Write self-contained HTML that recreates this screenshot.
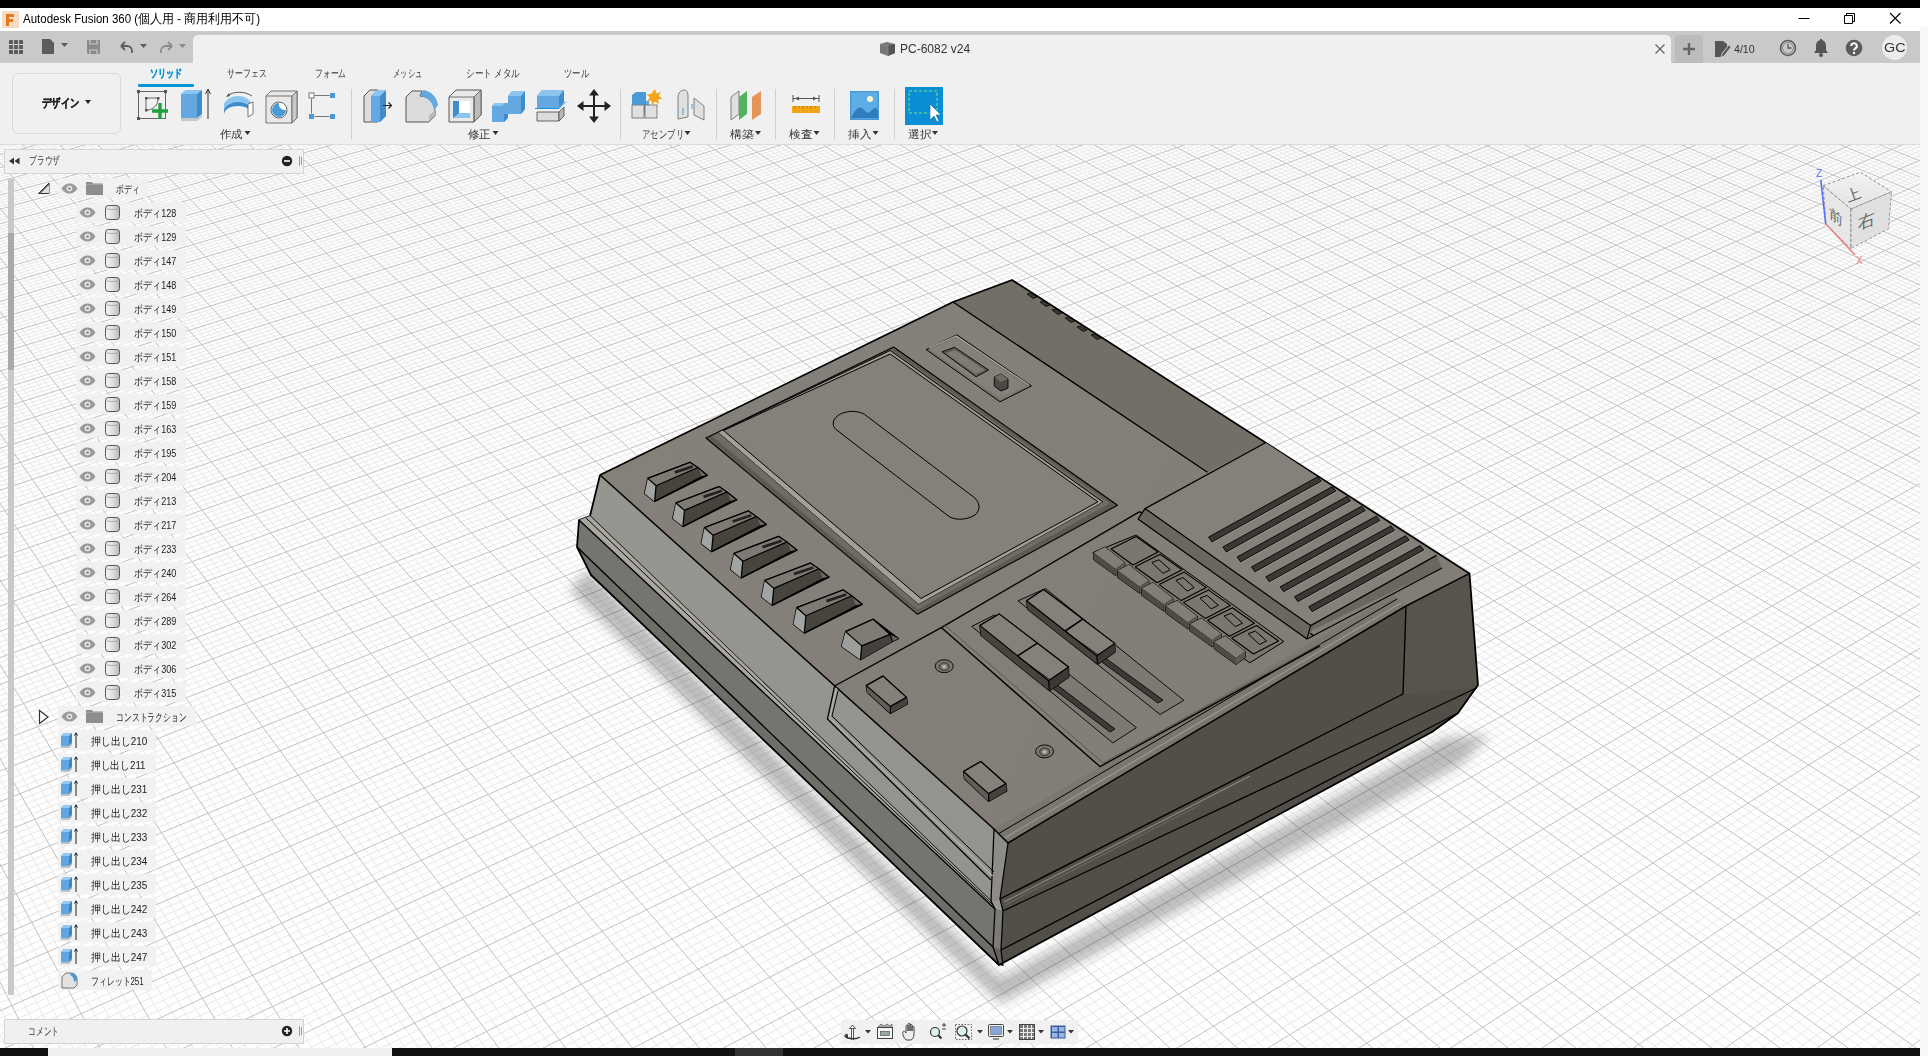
<!DOCTYPE html>
<html><head><meta charset="utf-8"><style>
*{margin:0;padding:0;box-sizing:border-box}
html,body{width:1928px;height:1056px;overflow:hidden;background:#f7f7f7;font-family:"Liberation Sans",sans-serif;color:#333}
.a{position:absolute}
</style></head><body>
<div class="a" style="left:0;top:145px;width:1920px;height:903px;background:#fefefe;overflow:hidden">
<svg class="a" style="left:0;top:0" width="1920" height="903" viewBox="0 0 1920 903">
<path d="M-454.7 104.4L1171.9 -317.6M-453.6 106.8L1174.9 -316.5M-452.5 109.3L1177.9 -315.4M-451.4 111.8L1180.8 -314.2M-449.2 116.8L1186.8 -311.9M-448.0 119.3L1189.8 -310.8M-446.9 121.9L1192.8 -309.6M-445.8 124.4L1195.8 -308.5M-443.5 129.5L1201.9 -306.1M-442.3 132.1L1204.9 -305.0M-441.2 134.7L1208.0 -303.8M-440.0 137.3L1211.0 -302.6M-437.7 142.5L1217.1 -300.3M-436.5 145.1L1220.2 -299.1M-435.4 147.8L1223.3 -297.9M-434.2 150.4L1226.4 -296.7M-431.8 155.7L1232.6 -294.3M-430.6 158.4L1235.8 -293.1M-429.4 161.1L1238.9 -291.9M-428.2 163.8L1242.0 -290.7M-425.8 169.2L1248.3 -288.3M-424.6 172.0L1251.5 -287.1M-423.4 174.7L1254.7 -285.9M-422.1 177.5L1257.9 -284.7M-419.7 183.0L1264.3 -282.2M-418.4 185.8L1267.5 -281.0M-417.2 188.6L1270.7 -279.7M-415.9 191.4L1273.9 -278.5M-413.4 197.1L1280.4 -276.0M-412.1 199.9L1283.7 -274.8M-410.8 202.8L1286.9 -273.5M-409.6 205.7L1290.2 -272.2M-407.0 211.5L1296.8 -269.7M-405.7 214.4L1300.1 -268.5M-404.4 217.3L1303.4 -267.2M-403.1 220.2L1306.7 -265.9M-400.4 226.1L1313.4 -263.3M-399.1 229.1L1316.8 -262.1M-397.8 232.1L1320.1 -260.8M-396.4 235.1L1323.5 -259.5M-393.7 241.1L1330.3 -256.9M-392.4 244.2L1333.7 -255.6M-391.0 247.2L1337.1 -254.3M-389.7 250.3L1340.5 -252.9M-386.9 256.5L1347.4 -250.3M-385.5 259.6L1350.8 -249.0M-384.1 262.7L1354.3 -247.7M-382.7 265.8L1357.7 -246.3M-379.9 272.1L1364.7 -243.7M-378.5 275.3L1368.2 -242.3M-377.1 278.5L1371.7 -241.0M-375.7 281.7L1375.2 -239.6M-372.8 288.2L1382.3 -236.9M-371.4 291.4L1385.9 -235.5M-369.9 294.7L1389.4 -234.2M-368.4 297.9L1393.0 -232.8M-365.5 304.5L1400.2 -230.0M-364.0 307.9L1403.8 -228.7M-362.5 311.2L1407.4 -227.3M-361.0 314.5L1411.0 -225.9M-358.0 321.3L1418.3 -223.1M-356.5 324.7L1422.0 -221.7M-355.0 328.1L1425.7 -220.3M-353.5 331.5L1429.3 -218.8M-350.4 338.4L1436.7 -216.0M-348.8 341.9L1440.5 -214.6M-347.3 345.4L1444.2 -213.2M-345.7 348.9L1447.9 -211.7M-342.6 356.0L1455.4 -208.8M-341.0 359.5L1459.2 -207.4M-339.4 363.1L1463.0 -205.9M-337.8 366.7L1466.8 -204.5M-334.6 373.9L1474.4 -201.5M-332.9 377.6L1478.2 -200.1M-331.3 381.3L1482.1 -198.6M-329.7 384.9L1485.9 -197.1M-326.4 392.3L1493.7 -194.2M-324.7 396.1L1497.6 -192.7M-323.0 399.8L1501.5 -191.2M-321.4 403.6L1505.4 -189.7M-318.0 411.2L1513.3 -186.6M-316.3 415.0L1517.2 -185.1M-314.6 418.8L1521.2 -183.6M-312.8 422.7L1525.1 -182.1M-309.4 430.5L1533.1 -179.0M-307.6 434.4L1537.1 -177.5M-305.9 438.3L1541.2 -175.9M-304.1 442.3L1545.2 -174.4M-300.6 450.3L1553.3 -171.3M-298.8 454.3L1557.4 -169.7M-297.0 458.3L1561.5 -168.1M-295.2 462.4L1565.6 -166.5M-291.5 470.6L1573.8 -163.4M-289.7 474.7L1578.0 -161.8M-287.8 478.8L1582.1 -160.2M-286.0 483.0L1586.3 -158.6M-282.2 491.4L1594.7 -155.4M-280.4 495.6L1598.9 -153.8M-278.5 499.8L1603.1 -152.1M-276.6 504.1L1607.4 -150.5M-272.7 512.7L1615.9 -147.2M-270.8 517.0L1620.2 -145.6M-268.9 521.4L1624.5 -144.0M-266.9 525.8L1628.8 -142.3M-263.0 534.6L1637.4 -139.0M-261.0 539.1L1641.8 -137.3M-259.0 543.5L1646.1 -135.6M-257.0 548.0L1650.5 -134.0M-253.0 557.1L1659.3 -130.6M-250.9 561.7L1663.7 -128.9M-248.9 566.3L1668.2 -127.2M-246.8 570.9L1672.6 -125.5M-242.7 580.2L1681.6 -122.0M-240.6 584.9L1686.1 -120.3M-238.5 589.6L1690.6 -118.6M-236.4 594.3L1695.1 -116.8M-232.1 603.9L1704.2 -113.4M-229.9 608.7L1708.8 -111.6M-227.8 613.6L1713.3 -109.8M-225.6 618.4L1717.9 -108.1M-221.2 628.3L1727.2 -104.5M-219.0 633.2L1731.8 -102.7M-216.8 638.2L1736.5 -101.0M-214.6 643.2L1741.2 -99.2M-210.1 653.3L1750.6 -95.5M-207.8 658.4L1755.3 -93.7M-205.5 663.6L1760.1 -91.9M-203.2 668.7L1764.8 -90.1M-198.6 679.1L1774.4 -86.4M-196.2 684.4L1779.2 -84.6M-193.9 689.6L1784.0 -82.7M-191.5 694.9L1788.9 -80.8M-186.8 705.6L1798.6 -77.1M-184.4 711.0L1803.5 -75.2M-181.9 716.4L1808.4 -73.3M-179.5 721.9L1813.3 -71.5M-174.6 732.9L1823.3 -67.7M-172.1 738.5L1828.2 -65.7M-169.6 744.1L1833.2 -63.8M-167.1 749.7L1838.2 -61.9M-162.1 761.0L1848.3 -58.0M-159.5 766.7L1853.4 -56.1M-157.0 772.5L1858.5 -54.1M-154.4 778.3L1863.6 -52.2M-149.2 790.0L1873.8 -48.2M-146.5 795.9L1879.0 -46.3M-143.9 801.8L1884.2 -44.3M-141.2 807.8L1889.4 -42.3M-135.9 819.8L1899.8 -38.3M-133.2 825.9L1905.1 -36.2M-130.4 832.0L1910.4 -34.2M-127.7 838.2L1915.6 -32.2M-122.2 850.6L1926.3 -28.1M-119.4 856.9L1931.6 -26.1M-116.6 863.2L1937.0 -24.0M-113.7 869.5L1942.4 -21.9M-108.0 882.3L1953.2 -17.8M-105.1 888.8L1958.7 -15.7M-102.2 895.3L1964.1 -13.6M-99.3 901.9L1969.6 -11.5M-93.4 915.1L1980.6 -7.2M-90.4 921.8L1986.2 -5.1M-87.4 928.5L1991.8 -3.0M-84.4 935.3L1997.4 -0.8M-78.3 948.9L2008.6 3.5M-75.3 955.8L2014.2 5.7M-72.2 962.8L2019.9 7.8M-69.1 969.8L2025.6 10.0M-62.8 983.9L2037.1 14.4M-59.6 991.0L2042.8 16.6M-56.4 998.2L2048.6 18.8M-53.2 1005.4L2054.4 21.1M-46.7 1020.0L2066.1 25.5M-43.4 1027.4L2071.9 27.8M-40.1 1034.8L2077.8 30.1M-36.7 1042.3L2083.7 32.3M-30.0 1057.4L2095.6 36.9M-26.6 1065.0L2101.6 39.2M-23.2 1072.7L2107.6 41.5M-19.7 1080.4L2113.7 43.8M-12.8 1096.1L2125.8 48.5M-9.3 1104.0L2131.9 50.8M-5.7 1111.9L2138.0 53.2M-2.1 1119.9L2144.1 55.5M5.1 1136.1L2156.5 60.3M8.7 1144.3L2162.7 62.6M12.4 1152.5L2169.0 65.0M16.1 1160.8L2175.2 67.4M23.6 1177.6L2187.8 72.3M27.3 1186.1L2194.2 74.7M31.2 1194.6L2200.6 77.2M35.0 1203.2L2206.9 79.6M42.7 1220.6L2219.8 84.5M46.7 1229.4L2226.3 87.0M50.6 1238.3L2232.8 89.5M54.6 1247.2L2239.3 92.0M62.6 1265.3L2252.4 97.1M66.7 1274.4L2259.0 99.6M70.8 1283.6L2265.6 102.1M74.9 1292.9L2272.3 104.7M83.3 1311.6L2285.7 109.8M87.5 1321.1L2292.4 112.4M91.8 1330.7L2299.2 115.0M96.1 1340.3L2306.0 117.6M104.8 1359.8L2319.6 122.9M109.2 1369.7L2326.5 125.5M113.6 1379.6L2333.4 128.2M118.0 1389.6L2340.3 130.8M127.1 1409.9L2354.3 136.2M131.6 1420.1L2361.3 138.9M136.3 1430.5L2368.4 141.6M140.9 1440.9L2375.4 144.3M150.3 1462.0L2389.7 149.7M155.1 1472.7L2396.8 152.5M159.9 1483.4L2404.0 155.3M164.7 1494.3L2411.3 158.0M174.5 1516.3L2425.8 163.6M179.4 1527.4L2433.1 166.4M184.4 1538.6L2440.5 169.2M189.5 1549.9L2447.9 172.1M199.7 1572.8L2462.7 177.8M204.9 1584.4L2470.2 180.7M210.1 1596.1L2477.7 183.5M215.3 1607.9L2485.3 186.4M226.0 1631.8L2500.4 192.3M231.4 1643.9L2508.1 195.2M236.8 1656.2L2515.8 198.1M242.3 1668.5L2523.5 201.1M253.4 1693.5L2539.0 207.1M259.1 1706.1L2546.8 210.0M264.8 1718.9L2554.6 213.1M270.5 1731.7L2562.5 216.1M282.1 1757.9L2578.4 222.2M288.0 1771.1L2586.3 225.2M294.0 1784.4L2594.4 228.3M300.0 1797.9L2602.4 231.4M312.2 1825.2L2618.6 237.6M318.3 1839.1L2626.8 240.8M324.6 1853.1L2635.0 243.9M330.9 1867.2L2643.2 247.1M343.6 1895.8L2659.8 253.4M350.1 1910.3L2668.2 256.6M356.6 1925.0L2676.6 259.9M363.2 1939.8L2685.0 263.1M376.6 1969.8L2702.0 269.6M383.4 1985.0L2710.5 272.9M390.2 2000.4L2719.1 276.2M397.1 2015.9L2727.7 279.5M411.2 2047.4L2745.1 286.1M418.3 2063.4L2753.8 289.5M425.5 2079.6L2762.6 292.9M432.8 2095.9L2771.4 296.3M447.6 2129.0L2789.2 303.1M455.1 2145.9L2798.1 306.5M462.6 2162.9L2807.1 310.0M470.3 2180.0L2816.1 313.4M-448.6 100.0L493.8 2184.7M-441.4 98.2L509.5 2172.2M-434.2 96.3L525.1 2159.7M-427.0 94.4L540.5 2147.3M-412.7 90.7L571.1 2122.8M-405.6 88.9L586.2 2110.7M-398.5 87.1L601.2 2098.7M-391.4 85.2L616.2 2086.7M-377.3 81.6L645.7 2063.1M-370.3 79.8L660.3 2051.4M-363.3 77.9L674.8 2039.8M-356.3 76.1L689.1 2028.2M-342.4 72.5L717.6 2005.4M-335.5 70.7L731.7 1994.1M-328.6 69.0L745.7 1982.9M-321.7 67.2L759.6 1971.8M-308.0 63.6L787.1 1949.7M-301.1 61.8L800.8 1938.8M-294.3 60.1L814.3 1928.0M-287.5 58.3L827.7 1917.2M-274.0 54.8L854.3 1895.9M-267.3 53.1L867.5 1885.4M-260.5 51.3L880.6 1874.9M-253.8 49.6L893.6 1864.5M-240.5 46.1L919.3 1843.9M-233.8 44.4L932.0 1833.7M-227.2 42.7L944.7 1823.5M-220.6 41.0L957.2 1813.5M-207.4 37.6L982.1 1793.5M-200.8 35.9L994.4 1783.6M-194.3 34.2L1006.7 1773.8M-187.7 32.5L1018.9 1764.1M-174.7 29.1L1043.0 1744.8M-168.3 27.4L1054.9 1735.2M-161.8 25.8L1066.8 1725.7M-155.3 24.1L1078.5 1716.3M-142.5 20.8L1101.9 1697.6M-136.1 19.1L1113.4 1688.3M-129.7 17.5L1124.9 1679.1M-123.4 15.8L1136.4 1670.0M-110.7 12.5L1159.0 1651.8M-104.4 10.9L1170.2 1642.8M-98.1 9.3L1181.3 1633.9M-91.8 7.6L1192.4 1625.1M-79.3 4.4L1214.3 1607.5M-73.0 2.8L1225.2 1598.8M-66.8 1.2L1236.0 1590.1M-60.6 -0.4L1246.7 1581.5M-48.3 -3.6L1268.0 1564.5M-42.1 -5.2L1278.6 1556.0M-36.0 -6.8L1289.1 1547.6M-29.9 -8.4L1299.5 1539.3M-17.7 -11.5L1320.1 1522.7M-11.6 -13.1L1330.4 1514.5M-5.5 -14.7L1340.5 1506.4M0.5 -16.3L1350.7 1498.3M12.6 -19.4L1370.7 1482.2M18.6 -20.9L1380.7 1474.2M24.6 -22.5L1390.5 1466.3M30.5 -24.0L1400.4 1458.4M42.4 -27.1L1419.8 1442.8M48.3 -28.6L1429.5 1435.1M54.3 -30.2L1439.1 1427.4M60.1 -31.7L1448.7 1419.8M71.9 -34.7L1467.6 1404.6M77.7 -36.2L1477.0 1397.1M83.6 -37.8L1486.3 1389.6M89.4 -39.3L1495.6 1382.2M101.0 -42.3L1514.0 1367.4M106.8 -43.8L1523.1 1360.1M112.6 -45.3L1532.2 1352.8M118.3 -46.7L1541.2 1345.6M129.8 -49.7L1559.1 1331.3M135.5 -51.2L1568.0 1324.2M141.2 -52.7L1576.8 1317.1M146.9 -54.1L1585.6 1310.0M158.2 -57.1L1603.0 1296.1M163.8 -58.5L1611.6 1289.2M169.4 -60.0L1620.2 1282.3M175.1 -61.4L1628.8 1275.4M186.2 -64.3L1645.7 1261.9M191.8 -65.8L1654.1 1255.1M197.4 -67.2L1662.5 1248.4M202.9 -68.7L1670.8 1241.8M214.0 -71.5L1687.3 1228.6M219.5 -72.9L1695.5 1222.0M225.0 -74.4L1703.6 1215.5M230.4 -75.8L1711.7 1209.0M241.4 -78.6L1727.8 1196.1M246.8 -80.0L1735.8 1189.7M252.2 -81.4L1743.7 1183.4M257.6 -82.8L1751.6 1177.0M268.4 -85.6L1767.3 1164.5M273.8 -87.0L1775.1 1158.3M279.2 -88.4L1782.8 1152.1M284.5 -89.8L1790.5 1145.9M295.2 -92.5L1805.7 1133.7M300.5 -93.9L1813.3 1127.6M305.8 -95.3L1820.8 1121.6M311.1 -96.7L1828.3 1115.6M321.6 -99.4L1843.2 1103.6M326.9 -100.7L1850.6 1097.7M332.1 -102.1L1858.0 1091.8M337.3 -103.4L1865.3 1086.0M347.7 -106.1L1879.8 1074.4M352.9 -107.5L1887.0 1068.6M358.1 -108.8L1894.1 1062.9M363.3 -110.2L1901.3 1057.1M373.5 -112.8L1915.4 1045.8M378.7 -114.2L1922.5 1040.2M383.8 -115.5L1929.5 1034.6M388.9 -116.8L1936.4 1029.0M399.1 -119.4L1950.2 1017.9M404.1 -120.7L1957.1 1012.4M409.2 -122.1L1963.9 1007.0M414.2 -123.4L1970.7 1001.5M424.3 -126.0L1984.2 990.7M429.3 -127.3L1990.9 985.3M434.3 -128.6L1997.6 980.0M439.3 -129.8L2004.2 974.7M449.2 -132.4L2017.4 964.1M454.2 -133.7L2023.9 958.9M459.1 -135.0L2030.4 953.7M464.1 -136.3L2036.9 948.5M473.9 -138.8L2049.7 938.2M478.8 -140.1L2056.1 933.1M483.7 -141.3L2062.5 928.0M488.5 -142.6L2068.8 922.9M498.3 -145.1L2081.4 912.8M503.1 -146.4L2087.6 907.8M507.9 -147.6L2093.8 902.9M512.8 -148.9L2100.0 897.9M522.4 -151.4L2112.3 888.1M527.2 -152.6L2118.4 883.2M531.9 -153.8L2124.5 878.3M536.7 -155.1L2130.5 873.5M546.2 -157.5L2142.5 863.9M550.9 -158.8L2148.5 859.1M555.7 -160.0L2154.4 854.3M560.4 -161.2L2160.3 849.6M569.8 -163.6L2172.1 840.2M574.4 -164.8L2177.9 835.5M579.1 -166.1L2183.7 830.9M583.8 -167.3L2189.5 826.3M593.1 -169.7L2200.9 817.1M597.7 -170.9L2206.6 812.5M602.3 -172.1L2212.3 807.9M606.9 -173.3L2218.0 803.4M616.1 -175.6L2229.2 794.4M620.7 -176.8L2234.8 790.0M625.3 -178.0L2240.3 785.5M629.8 -179.2L2245.9 781.1M638.9 -181.5L2256.8 772.3M643.5 -182.7L2262.3 767.9M648.0 -183.9L2267.7 763.5M652.5 -185.0L2273.1 759.2M661.5 -187.4L2283.9 750.6M666.0 -188.5L2289.2 746.3M670.4 -189.7L2294.6 742.1M674.9 -190.8L2299.9 737.8M683.8 -193.1L2310.4 729.4M688.2 -194.3L2315.6 725.2M692.6 -195.4L2320.8 721.0M697.1 -196.6L2326.0 716.9M705.9 -198.9L2336.3 708.6M710.2 -200.0L2341.4 704.5M714.6 -201.1L2346.5 700.4M719.0 -202.3L2351.6 696.3M727.7 -204.5L2361.7 688.3M732.0 -205.6L2366.7 684.2M736.4 -206.8L2371.7 680.2M740.7 -207.9L2376.7 676.3M749.3 -210.1L2386.6 668.3M753.6 -211.2L2391.5 664.4M757.9 -212.3L2396.4 660.5M762.1 -213.4L2401.3 656.6M770.7 -215.6L2410.9 648.8M774.9 -216.7L2415.8 645.0M779.1 -217.8L2420.6 641.1M783.4 -218.9L2425.3 637.3M791.8 -221.1L2434.8 629.7M796.0 -222.2L2439.5 625.9M800.2 -223.3L2444.2 622.1M804.4 -224.4L2448.9 618.4M812.7 -226.5L2458.2 610.9M816.9 -227.6L2462.9 607.2M821.0 -228.7L2467.5 603.5M825.2 -229.8L2472.0 599.9M833.4 -231.9L2481.2 592.6M837.6 -233.0L2485.7 588.9M841.7 -234.0L2490.2 585.3M845.8 -235.1L2494.7 581.7M853.9 -237.2L2503.7 574.5M858.0 -238.3L2508.1 571.0M862.1 -239.3L2512.5 567.4M866.1 -240.4L2517.0 563.9M874.2 -242.4L2525.7 556.9M878.2 -243.5L2530.1 553.4M882.3 -244.5L2534.4 549.9M886.3 -245.6L2538.8 546.4M894.3 -247.6L2547.4 539.5M898.3 -248.7L2551.6 536.1M902.3 -249.7L2555.9 532.7M906.2 -250.7L2560.2 529.3M914.2 -252.8L2568.6 522.5M918.1 -253.8L2572.8 519.2M922.0 -254.8L2577.0 515.8M926.0 -255.9L2581.1 512.5M933.8 -257.9L2589.4 505.8M937.7 -258.9L2593.5 502.5M941.6 -259.9L2597.6 499.2M945.5 -260.9L2601.7 496.0M953.3 -262.9L2609.9 489.5M957.2 -263.9L2613.9 486.2M961.0 -264.9L2617.9 483.0M964.9 -265.9L2622.0 479.8M972.6 -267.9L2629.9 473.4M976.4 -268.9L2633.9 470.2M980.2 -269.9L2637.9 467.0M984.0 -270.9L2641.8 463.9M991.6 -272.9L2649.6 457.6M995.4 -273.8L2653.5 454.5M999.2 -274.8L2657.4 451.4M1003.0 -275.8L2661.3 448.3M1010.5 -277.7L2669.0 442.1M1014.3 -278.7L2672.8 439.0M1018.0 -279.7L2676.6 436.0M1021.8 -280.7L2680.4 432.9M1029.2 -282.6L2688.0 426.9M1033.0 -283.5L2691.7 423.9M1036.7 -284.5L2695.5 420.9M1040.4 -285.5L2699.2 417.9M1047.8 -287.4L2706.6 411.9M1051.4 -288.3L2710.3 409.0M1055.1 -289.3L2714.0 406.0M1058.8 -290.2L2717.7 403.1M1066.1 -292.1L2725.0 397.2M1069.7 -293.1L2728.6 394.3M1073.4 -294.0L2732.2 391.4M1077.0 -295.0L2735.8 388.6M1084.2 -296.8L2743.0 382.8M1087.9 -297.8L2746.5 380.0M1091.5 -298.7L2750.1 377.1M1095.1 -299.6L2753.6 374.3M1102.2 -301.5L2760.7 368.6M1105.8 -302.4L2764.2 365.8M1109.4 -303.3L2767.7 363.0M1112.9 -304.3L2771.1 360.2M1120.0 -306.1L2778.1 354.7M1123.6 -307.0L2781.5 351.9M1127.1 -307.9L2784.9 349.2M1130.6 -308.8L2788.4 346.4M1137.7 -310.7L2795.2 341.0M1141.2 -311.6L2798.6 338.3M1144.7 -312.5L2801.9 335.6M1148.2 -313.4L2805.3 332.9M1155.1 -315.2L2812.0 327.5M1158.6 -316.1L2815.3 324.9M1162.1 -317.0L2818.6 322.2M1165.5 -317.9L2821.9 319.6" stroke="#e9e9e9" stroke-width="1" fill="none"/>
<path d="M-455.8 101.9L1169.0 -318.8M-450.3 114.3L1183.8 -313.1M-444.6 127.0L1198.8 -307.3M-438.9 139.9L1214.1 -301.5M-433.0 153.1L1229.5 -295.5M-427.0 166.5L1245.2 -289.5M-420.9 180.2L1261.1 -283.4M-414.6 194.3L1277.2 -277.3M-408.3 208.6L1293.5 -271.0M-401.8 223.2L1310.1 -264.6M-395.1 238.1L1326.9 -258.2M-388.3 253.4L1343.9 -251.6M-381.3 269.0L1361.2 -245.0M-374.2 284.9L1378.8 -238.3M-367.0 301.2L1396.6 -231.4M-359.5 317.9L1414.7 -224.5M-351.9 335.0L1433.0 -217.4M-344.2 352.4L1451.7 -210.3M-336.2 370.3L1470.6 -203.0M-328.0 388.6L1489.8 -195.6M-319.7 407.4L1509.3 -188.1M-311.1 426.6L1529.1 -180.5M-302.3 446.3L1549.3 -172.8M-293.3 466.5L1569.7 -165.0M-284.1 487.2L1590.5 -157.0M-274.7 508.4L1611.6 -148.9M-264.9 530.2L1633.1 -140.6M-255.0 552.5L1654.9 -132.3M-244.7 575.5L1677.1 -123.8M-234.2 599.1L1699.6 -115.1M-223.4 623.3L1722.6 -106.3M-212.3 648.3L1745.9 -97.4M-200.9 673.9L1769.6 -88.2M-189.2 700.3L1793.7 -79.0M-177.1 727.4L1818.3 -69.6M-164.6 755.3L1843.3 -60.0M-151.8 784.1L1868.7 -50.2M-138.6 813.8L1894.6 -40.3M-124.9 844.4L1921.0 -30.2M-110.9 875.9L1947.8 -19.9M-96.4 908.5L1975.1 -9.4M-81.4 942.1L2003.0 1.3M-65.9 976.8L2031.3 12.2M-49.9 1012.7L2060.2 23.3M-33.4 1049.8L2089.7 34.6M-16.3 1088.2L2119.7 46.1M1.5 1128.0L2150.3 57.9M19.8 1169.2L2181.5 69.9M38.9 1211.9L2213.4 82.1M58.6 1256.2L2245.8 94.5M79.1 1302.2L2279.0 107.3M100.4 1350.0L2312.8 120.2M122.5 1399.7L2347.3 133.5M145.6 1451.4L2382.5 147.0M169.6 1505.2L2418.5 160.8M194.6 1561.3L2455.3 174.9M220.6 1619.8L2492.8 189.3M247.9 1680.9L2531.2 204.1M276.3 1744.7L2570.4 219.1M306.1 1811.5L2610.5 234.5M337.2 1881.4L2651.5 250.2M369.9 1954.7L2693.5 266.3M404.1 2031.6L2736.4 282.8M440.1 2112.4L2780.3 299.7M478.0 2197.4L2825.2 316.9M-455.8 101.9L478.0 2197.4M-419.8 92.6L555.9 2135.0M-384.4 83.4L631.0 2074.9M-349.4 74.3L703.4 2016.8M-314.8 65.4L773.4 1960.7M-280.8 56.6L841.1 1906.5M-247.1 47.9L906.5 1854.1M-214.0 39.3L969.7 1803.5M-181.2 30.8L1030.9 1754.4M-148.9 22.4L1090.2 1706.9M-117.0 14.2L1147.7 1660.9M-85.5 6.0L1203.4 1616.2M-54.4 -2.0L1257.4 1573.0M-23.8 -10.0L1309.8 1531.0M6.6 -17.8L1360.7 1490.2M36.5 -25.6L1410.1 1450.6M66.0 -33.2L1458.1 1412.2M95.2 -40.8L1504.8 1374.8M124.0 -48.2L1550.2 1338.4M152.5 -55.6L1594.3 1303.1M180.7 -62.9L1637.3 1268.6M208.4 -70.1L1679.1 1235.1M235.9 -77.2L1719.8 1202.5M263.0 -84.2L1759.5 1170.7M289.8 -91.2L1798.1 1139.8M316.3 -98.0L1835.8 1109.6M342.5 -104.8L1872.5 1080.2M368.4 -111.5L1908.4 1051.5M394.0 -118.1L1943.3 1023.4M419.3 -124.7L1977.5 996.1M444.3 -131.1L2010.8 969.4M469.0 -137.5L2043.3 943.3M493.4 -143.9L2075.1 917.9M517.6 -150.1L2106.2 893.0M541.5 -156.3L2136.5 868.7M565.1 -162.4L2166.2 844.9M588.4 -168.5L2195.2 821.7M611.5 -174.4L2223.6 798.9M634.4 -180.4L2251.4 776.7M657.0 -186.2L2278.5 754.9M679.3 -192.0L2305.1 733.6M701.5 -197.7L2331.2 712.7M723.3 -203.4L2356.7 692.3M745.0 -209.0L2381.6 672.3M766.4 -214.5L2406.1 652.7M787.6 -220.0L2430.1 633.5M808.6 -225.5L2453.6 614.7M829.3 -230.8L2476.6 596.2M849.8 -236.1L2499.2 578.1M870.2 -241.4L2521.3 560.4M890.3 -246.6L2543.1 543.0M910.2 -251.8L2564.4 525.9M929.9 -256.9L2585.3 509.1M949.4 -261.9L2605.8 492.7M968.7 -266.9L2626.0 476.6M987.8 -271.9L2645.7 460.7M1006.8 -276.8L2665.1 445.2M1025.5 -281.6L2684.2 429.9M1044.1 -286.4L2702.9 414.9M1062.4 -291.2L2721.3 400.2M1080.6 -295.9L2739.4 385.7M1098.6 -300.6L2757.2 371.4M1116.5 -305.2L2774.6 357.5M1134.2 -309.8L2791.8 343.7M1151.7 -314.3L2808.6 330.2M1169.0 -318.8L2825.2 316.9" stroke="#c2c2c2" stroke-width="1" fill="none"/>
</svg>
<svg class="a" style="left:0;top:-145px" width="1920" height="1048" viewBox="0 0 1920 1048">
<defs>
<filter id="blur" x="-30%" y="-30%" width="160%" height="160%"><feGaussianBlur stdDeviation="6"/></filter>
<filter id="blur2" x="-30%" y="-30%" width="160%" height="160%"><feGaussianBlur stdDeviation="3"/></filter>
<linearGradient id="gL1" gradientUnits="userSpaceOnUse" x1="600" y1="480" x2="990" y2="860"><stop offset="0" stop-color="#95968f"/><stop offset="1" stop-color="#93948e"/></linearGradient>
<linearGradient id="gTop" gradientUnits="userSpaceOnUse" x1="700" y1="400" x2="1300" y2="700"><stop offset="0" stop-color="#85817a"/><stop offset="1" stop-color="#827e77"/></linearGradient>
<radialGradient id="gScrew"><stop offset="0" stop-color="#d8d6d0"/><stop offset=".5" stop-color="#8a877f"/><stop offset="1" stop-color="#5a5750"/></radialGradient>
</defs>
<polygon points="588.0,570.0 1000.0,978.0 1445.0,738.0 1490.0,735.0 1460.0,765.0 1000.0,1003.0 570.0,590.0" fill="#000" fill-opacity="0.26" filter="url(#blur)"/>
<polygon points="577.0,547.0 993.0,947.0 999.0,965.0 591.0,575.0" fill="#6f6d67"/>
<polygon points="579.0,520.0 995.0,909.0 993.0,947.0 577.0,547.0" fill="#747570"/>
<polygon points="590.0,516.0 991.0,901.0 995.0,909.0 579.0,520.0" fill="#8f8e87"/>
<polygon points="600.0,475.0 994.0,829.0 991.0,901.0 590.0,516.0" fill="url(#gL1)"/>
<polygon points="994.0,829.0 1008.0,843.0 1406.0,606.0 1469.5,573.4 1478.0,685.0 1458.0,713.0 1432.0,732.0 999.0,965.0 993.0,947.0 995.0,909.0 991.0,901.0" fill="#524f48"/>
<polygon points="994.0,829.0 1008.0,843.0 1000.0,899.0 991.0,901.0" fill="#8d8c86"/>
<polygon points="991.0,901.0 1000.0,899.0 1003.0,911.0 995.0,909.0" fill="#9a9892"/>
<polygon points="995.0,909.0 1003.0,911.0 1001.0,950.0 993.0,947.0" fill="#7c7b76"/>
<polygon points="993.0,947.0 1001.0,950.0 1003.0,966.0 999.0,965.0" fill="#66645e"/>
<polygon points="1406.0,606.0 1469.5,573.4 1478.0,685.0 1476.5,688.0 1402.5,694.2" fill="#57544d"/>
<polygon points="600.0,475.0 953.0,302.0 1012.0,280.0 1469.5,573.4 1406.0,606.0 1008.0,843.0 994.0,829.0" fill="url(#gTop)"/>
<polygon points="953.0,302.0 1012.0,280.0 1265.5,442.7 1207.5,472.3" fill="#736f66"/>
<polygon points="994.0,829.0 1394.0,594.0 1406.0,606.0 1008.0,843.0" fill="#7a776f"/>
<polyline points="998.0,834.0 1397.0,599.0" fill="none" stroke="#000" stroke-width="1.00" stroke-linejoin="round"/>
<polyline points="1003.0,839.0 1401.0,603.0" fill="none" stroke="#9c998f" stroke-width="1.12" stroke-linejoin="round"/>
<polyline points="1004.0,902.0 1250.0,776.0" fill="none" stroke="#8a877f" stroke-width="1.25" stroke-linejoin="round"/>
<polyline points="1005.0,905.0 1200.0,805.0" fill="none" stroke="#77746d" stroke-width="0.75" stroke-linejoin="round"/>
<polyline points="600.0,475.0 953.0,302.0 1012.0,280.0 1469.5,573.4 1478.0,685.0 1458.0,713.0 1432.0,732.0 999.0,965.0 591.0,575.0 577.0,547.0 579.0,520.0 590.0,516.0 600.0,475.0" fill="none" stroke="#000" stroke-width="1.75" stroke-linejoin="round"/>
<polyline points="600.0,475.0 994.0,829.0 1008.0,843.0 1406.0,606.0 1469.5,573.4" fill="none" stroke="#000" stroke-width="1.50" stroke-linejoin="round"/>
<polyline points="590.0,516.0 991.0,901.0" fill="none" stroke="#000" stroke-width="1.25" stroke-linejoin="round"/>
<polygon points="590.0,516.0 991.0,901.0 995.0,909.0 579.0,520.0" fill="#a9a79f"/>
<polyline points="586.0,518.0 993.0,905.0" fill="none" stroke="#000" stroke-width="1.00" stroke-linejoin="round"/>
<polyline points="579.0,520.0 995.0,909.0" fill="none" stroke="#000" stroke-width="1.38" stroke-linejoin="round"/>
<polyline points="577.0,547.0 993.0,947.0" fill="none" stroke="#000" stroke-width="1.38" stroke-linejoin="round"/>
<polyline points="994.0,829.0 991.0,901.0 995.0,909.0 993.0,947.0 999.0,965.0" fill="none" stroke="#000" stroke-width="1.25" stroke-linejoin="round"/>
<polyline points="1008.0,843.0 1000.0,899.0 1003.0,911.0 1001.0,950.0 1003.0,966.0" fill="none" stroke="#000" stroke-width="1.25" stroke-linejoin="round"/>
<polyline points="1000.0,899.0 1403.0,694.0 1406.0,606.0" fill="none" stroke="#000" stroke-width="1.38" stroke-linejoin="round"/>
<polyline points="1003.0,911.0 1476.5,688.0" fill="none" stroke="#000" stroke-width="1.25" stroke-linejoin="round"/>
<polyline points="1001.0,950.0 1458.0,713.0" fill="none" stroke="#000" stroke-width="1.25" stroke-linejoin="round"/>
<polyline points="953.0,302.0 1207.5,472.3" fill="none" stroke="#000" stroke-width="1.38" stroke-linejoin="round"/>
<polyline points="834.6,686.0 827.5,719.0 991.0,880.0" fill="none" stroke="#000" stroke-width="1.25" stroke-linejoin="round"/>
<polyline points="838.0,691.0 832.0,716.0 994.0,872.0" fill="none" stroke="#000" stroke-width="1.00" stroke-linejoin="round"/>
<polyline points="836.5,688.0 829.5,718.0 992.5,876.0" fill="none" stroke="#b0aea6" stroke-width="1.50" stroke-linejoin="round"/>
<polyline points="834.6,686.0 941.3,627.6 1139.7,511.6" fill="none" stroke="#000" stroke-width="1.38" stroke-linejoin="round"/>
<polyline points="941.3,627.6 1100.0,766.6 1320.0,645.8" fill="none" stroke="#000" stroke-width="1.38" stroke-linejoin="round"/>
<polyline points="944.0,624.5 1103.0,763.0 1322.0,643.0" fill="none" stroke="#55524b" stroke-width="0.88" stroke-linejoin="round"/>
<polyline points="1139.7,511.6 1313.7,635.9" fill="none" stroke="#000" stroke-width="1.38" stroke-linejoin="round"/>
<polygon points="706.0,438.0 893.6,347.0 1117.5,505.2 917.5,614.3" fill="#5d5a53" stroke="#000" stroke-width="1.1" stroke-linejoin="round"/>
<polygon points="712.0,436.0 891.0,349.5 1110.0,503.5 917.5,609.5" fill="#706c65"/>
<polygon points="718.6,432.3 890.2,350.5 1102.7,501.8 918.6,604.0" fill="#9e9b93" stroke="#000" stroke-width="1.0" stroke-linejoin="round"/>
<polygon points="723.5,430.5 890.2,354.0 1098.0,501.8 921.0,598.5" fill="#85817a"/>
<polygon points="718.6,432.3 723.5,430.5 921.0,598.5 1098.0,501.8 1102.7,501.8 918.6,604.0" fill="#a3a098"/>
<polyline points="723.5,430.5 890.2,354.0 1098.0,501.8 921.0,598.5 723.5,430.5" fill="none" stroke="#000" stroke-width="1.00" stroke-linejoin="round"/>
<path d="M836,429.5 L948,515.7 C953,520 965,521 975,515 C981,510 980,502 974,497.3 L864.3,414.2 C857,410 845,410.5 838,415.5 C832,420 832,426 836,429.5 Z" fill="none" stroke="#000" stroke-width="1"/>
<polygon points="926.1,349.5 956.8,334.8 1031.4,385.9 1000.0,401.8" fill="#7b776f" stroke="#000" stroke-width="1.0" stroke-linejoin="round"/>
<polygon points="930.0,349.5 956.8,338.0 1026.0,386.0 1000.0,398.0" fill="#85817a"/>
<polyline points="929.0,348.0 956.0,336.0 1029.0,385.0" fill="none" stroke="#a8a59d" stroke-width="1.12" stroke-linejoin="round"/>
<polygon points="942.0,351.8 954.5,347.3 988.6,370.0 976.1,376.8" fill="#5e5b54" stroke="#000" stroke-width="0.9" stroke-linejoin="round"/>
<polygon points="946.0,353.5 955.0,350.0 985.0,370.0 976.0,374.0" fill="#7f7b74"/>
<polygon points="994.3,377.0 1001.0,374.0 1008.0,379.0 1008.0,388.0 1001.0,391.0 994.3,386.0" fill="#4a4842" stroke="#000" stroke-width="0.9" stroke-linejoin="round"/>
<polygon points="994.3,377.0 1001.0,374.0 1008.0,379.0 1001.0,382.0" fill="#6f6b64"/>
<polygon points="1027.0,294.0 1031.0,293.0 1037.0,297.0 1033.0,298.5" fill="#3a3833" stroke="#000" stroke-width="0.7" stroke-linejoin="round"/>
<polygon points="1040.0,302.0 1044.0,301.0 1050.0,305.0 1046.0,306.5" fill="#3a3833" stroke="#000" stroke-width="0.7" stroke-linejoin="round"/>
<polygon points="1052.0,310.0 1056.0,309.0 1062.0,313.0 1058.0,314.5" fill="#3a3833" stroke="#000" stroke-width="0.7" stroke-linejoin="round"/>
<polygon points="1065.0,318.0 1069.0,317.0 1075.0,321.0 1071.0,322.5" fill="#3a3833" stroke="#000" stroke-width="0.7" stroke-linejoin="round"/>
<polygon points="1077.0,327.0 1081.0,326.0 1087.0,330.0 1083.0,331.5" fill="#3a3833" stroke="#000" stroke-width="0.7" stroke-linejoin="round"/>
<polygon points="1091.0,335.0 1095.0,334.0 1101.0,338.0 1097.0,339.5" fill="#3a3833" stroke="#000" stroke-width="0.7" stroke-linejoin="round"/>
<polygon points="647.8,478.4 690.0,462.3 707.2,475.3 654.6,501.4 644.7,493.5" fill="#000" stroke="#000" stroke-width="1.4" stroke-linejoin="round"/>
<polygon points="647.8,478.4 690.0,462.3 697.8,467.5 656.1,485.7" fill="#7e7a73"/>
<polygon points="656.1,485.7 697.8,467.5 701.5,476.9 654.6,501.4" fill="#47443e"/>
<polygon points="697.8,467.5 707.2,475.3 701.5,476.9" fill="#6d6a63"/>
<polygon points="647.8,478.4 656.1,485.7 654.6,501.4 644.7,493.5" fill="#a2a4a1"/>
<polyline points="647.8,478.4 690.0,462.3 697.8,467.5 656.1,485.7 647.8,478.4" fill="none" stroke="#000" stroke-width="1.25" stroke-linejoin="round"/>
<polyline points="656.1,485.7 654.6,501.4" fill="none" stroke="#000" stroke-width="1.25" stroke-linejoin="round"/>
<polyline points="697.8,467.5 707.2,475.3 701.5,476.9 654.6,501.4" fill="none" stroke="#000" stroke-width="1.25" stroke-linejoin="round"/>
<polyline points="674.8,472.4 692.8,466.4" fill="none" stroke="#222" stroke-width="2.75" stroke-linejoin="round"/>
<polygon points="676.0,503.0 719.0,486.6 736.6,499.8 682.9,526.5 672.8,518.4" fill="#000" stroke="#000" stroke-width="1.4" stroke-linejoin="round"/>
<polygon points="676.0,503.0 719.0,486.6 727.0,491.9 684.5,510.4" fill="#7e7a73"/>
<polygon points="684.5,510.4 727.0,491.9 730.8,501.5 682.9,526.5" fill="#47443e"/>
<polygon points="727.0,491.9 736.6,499.8 730.8,501.5" fill="#6d6a63"/>
<polygon points="676.0,503.0 684.5,510.4 682.9,526.5 672.8,518.4" fill="#a2a4a1"/>
<polyline points="676.0,503.0 719.0,486.6 727.0,491.9 684.5,510.4 676.0,503.0" fill="none" stroke="#000" stroke-width="1.25" stroke-linejoin="round"/>
<polyline points="684.5,510.4 682.9,526.5" fill="none" stroke="#000" stroke-width="1.25" stroke-linejoin="round"/>
<polyline points="727.0,491.9 736.6,499.8 730.8,501.5 682.9,526.5" fill="none" stroke="#000" stroke-width="1.25" stroke-linejoin="round"/>
<polyline points="703.5,496.9 721.9,490.8" fill="none" stroke="#222" stroke-width="2.75" stroke-linejoin="round"/>
<polygon points="704.5,527.7 748.4,511.0 766.3,524.5 711.6,551.6 701.3,543.4" fill="#000" stroke="#000" stroke-width="1.4" stroke-linejoin="round"/>
<polygon points="704.5,527.7 748.4,511.0 756.5,516.4 713.1,535.3" fill="#7e7a73"/>
<polygon points="713.1,535.3 756.5,516.4 760.3,526.1 711.6,551.6" fill="#47443e"/>
<polygon points="756.5,516.4 766.3,524.5 760.3,526.1" fill="#6d6a63"/>
<polygon points="704.5,527.7 713.1,535.3 711.6,551.6 701.3,543.4" fill="#a2a4a1"/>
<polyline points="704.5,527.7 748.4,511.0 756.5,516.4 713.1,535.3 704.5,527.7" fill="none" stroke="#000" stroke-width="1.25" stroke-linejoin="round"/>
<polyline points="713.1,535.3 711.6,551.6" fill="none" stroke="#000" stroke-width="1.25" stroke-linejoin="round"/>
<polyline points="756.5,516.4 766.3,524.5 760.3,526.1 711.6,551.6" fill="none" stroke="#000" stroke-width="1.25" stroke-linejoin="round"/>
<polyline points="732.6,521.5 751.3,515.2" fill="none" stroke="#222" stroke-width="2.75" stroke-linejoin="round"/>
<polygon points="734.0,553.5 778.7,536.4 797.0,550.2 741.2,577.9 730.7,569.5" fill="#000" stroke="#000" stroke-width="1.4" stroke-linejoin="round"/>
<polygon points="734.0,553.5 778.7,536.4 787.0,541.9 742.8,561.2" fill="#7e7a73"/>
<polygon points="742.8,561.2 787.0,541.9 790.9,551.9 741.2,577.9" fill="#47443e"/>
<polygon points="787.0,541.9 797.0,550.2 790.9,551.9" fill="#6d6a63"/>
<polygon points="734.0,553.5 742.8,561.2 741.2,577.9 730.7,569.5" fill="#a2a4a1"/>
<polyline points="734.0,553.5 778.7,536.4 787.0,541.9 742.8,561.2 734.0,553.5" fill="none" stroke="#000" stroke-width="1.25" stroke-linejoin="round"/>
<polyline points="742.8,561.2 741.2,577.9" fill="none" stroke="#000" stroke-width="1.25" stroke-linejoin="round"/>
<polyline points="787.0,541.9 797.0,550.2 790.9,551.9 741.2,577.9" fill="none" stroke="#000" stroke-width="1.25" stroke-linejoin="round"/>
<polyline points="762.6,547.1 781.7,540.8" fill="none" stroke="#222" stroke-width="2.75" stroke-linejoin="round"/>
<polygon points="764.8,580.5 810.4,563.1 829.0,577.2 772.1,605.3 761.5,596.8" fill="#000" stroke="#000" stroke-width="1.4" stroke-linejoin="round"/>
<polygon points="764.8,580.5 810.4,563.1 818.8,568.7 773.8,588.4" fill="#7e7a73"/>
<polygon points="773.8,588.4 818.8,568.7 822.8,578.9 772.1,605.3" fill="#47443e"/>
<polygon points="818.8,568.7 829.0,577.2 822.8,578.9" fill="#6d6a63"/>
<polygon points="764.8,580.5 773.8,588.4 772.1,605.3 761.5,596.8" fill="#a2a4a1"/>
<polyline points="764.8,580.5 810.4,563.1 818.8,568.7 773.8,588.4 764.8,580.5" fill="none" stroke="#000" stroke-width="1.25" stroke-linejoin="round"/>
<polyline points="773.8,588.4 772.1,605.3" fill="none" stroke="#000" stroke-width="1.25" stroke-linejoin="round"/>
<polyline points="818.8,568.7 829.0,577.2 822.8,578.9 772.1,605.3" fill="none" stroke="#000" stroke-width="1.25" stroke-linejoin="round"/>
<polyline points="794.0,574.0 813.4,567.5" fill="none" stroke="#222" stroke-width="2.75" stroke-linejoin="round"/>
<polygon points="796.8,607.7 843.2,590.0 862.1,604.3 804.3,633.0 793.4,624.3" fill="#000" stroke="#000" stroke-width="1.4" stroke-linejoin="round"/>
<polygon points="796.8,607.7 843.2,590.0 851.8,595.7 805.9,615.7" fill="#7e7a73"/>
<polygon points="805.9,615.7 851.8,595.7 855.9,606.1 804.3,633.0" fill="#47443e"/>
<polygon points="851.8,595.7 862.1,604.3 855.9,606.1" fill="#6d6a63"/>
<polygon points="796.8,607.7 805.9,615.7 804.3,633.0 793.4,624.3" fill="#a2a4a1"/>
<polyline points="796.8,607.7 843.2,590.0 851.8,595.7 805.9,615.7 796.8,607.7" fill="none" stroke="#000" stroke-width="1.25" stroke-linejoin="round"/>
<polyline points="805.9,615.7 804.3,633.0" fill="none" stroke="#000" stroke-width="1.25" stroke-linejoin="round"/>
<polyline points="851.8,595.7 862.1,604.3 855.9,606.1 804.3,633.0" fill="none" stroke="#000" stroke-width="1.25" stroke-linejoin="round"/>
<polyline points="826.5,601.1 846.3,594.5" fill="none" stroke="#222" stroke-width="2.75" stroke-linejoin="round"/>
<polygon points="845.6,631.6 873.2,619.2 898.4,638.5 892.5,641.4 860.5,659.7 841.6,646.5" fill="#000" stroke="#000" stroke-width="1.4" stroke-linejoin="round"/>
<polygon points="845.6,631.6 873.2,619.2 889.9,634.3 861.8,645.9" fill="#807c75"/>
<polygon points="861.8,645.9 889.9,634.3 892.5,641.4 860.5,659.7" fill="#45423d"/>
<polygon points="889.9,634.3 898.4,638.5 892.5,641.4" fill="#66635c"/>
<polygon points="845.6,631.6 861.8,645.9 860.5,659.7 841.6,646.5" fill="#9c9e9b"/>
<polyline points="845.6,631.6 873.2,619.2 889.9,634.3 861.8,645.9 845.6,631.6" fill="none" stroke="#000" stroke-width="1.25" stroke-linejoin="round"/>
<polyline points="861.8,645.9 860.5,659.7" fill="none" stroke="#000" stroke-width="1.25" stroke-linejoin="round"/>
<polyline points="889.9,634.3 892.5,641.4" fill="none" stroke="#000" stroke-width="1.25" stroke-linejoin="round"/>
<polygon points="866.3,685.6 882.9,676.1 906.5,697.4 907.5,704.0 890.4,713.5 867.2,692.2" fill="#000" stroke="#000" stroke-width="1.3" stroke-linejoin="round"/>
<polygon points="866.3,685.6 882.9,676.1 906.5,697.4 890.4,706.4" fill="#84807a"/>
<polygon points="866.3,685.6 890.4,706.4 890.4,713.5 867.2,692.2" fill="#615e58"/>
<polygon points="890.4,706.4 906.5,697.4 907.5,704.0 890.4,713.5" fill="#45423d"/>
<polyline points="866.3,685.6 882.9,676.1 906.5,697.4 890.4,706.4 866.3,685.6" fill="none" stroke="#000" stroke-width="1.25" stroke-linejoin="round"/>
<polyline points="890.4,706.4 890.4,713.5" fill="none" stroke="#000" stroke-width="1.25" stroke-linejoin="round"/>
<polygon points="963.6,771.5 980.8,761.5 1005.8,783.8 1006.8,791.0 988.6,801.4 964.5,778.7" fill="#000" stroke="#000" stroke-width="1.3" stroke-linejoin="round"/>
<polygon points="963.6,771.5 980.8,761.5 1005.8,783.8 988.6,793.6" fill="#84807a"/>
<polygon points="963.6,771.5 988.6,793.6 988.6,801.4 964.5,778.7" fill="#615e58"/>
<polygon points="988.6,793.6 1005.8,783.8 1006.8,791.0 988.6,801.4" fill="#45423d"/>
<polyline points="963.6,771.5 980.8,761.5 1005.8,783.8 988.6,793.6 963.6,771.5" fill="none" stroke="#000" stroke-width="1.25" stroke-linejoin="round"/>
<polyline points="988.6,793.6 988.6,801.4" fill="none" stroke="#000" stroke-width="1.25" stroke-linejoin="round"/>
<ellipse cx="944.2" cy="666.2" rx="9" ry="6.5" fill="#7a766f" stroke="#000" stroke-width="0.9"/>
<ellipse cx="944.2" cy="666.7" rx="5" ry="4" fill="url(#gScrew)" stroke="#222" stroke-width="0.6"/>
<ellipse cx="1044.6" cy="751.4" rx="9" ry="6.5" fill="#7a766f" stroke="#000" stroke-width="0.9"/>
<ellipse cx="1044.6" cy="751.9" rx="5" ry="4" fill="url(#gScrew)" stroke="#222" stroke-width="0.6"/>
<polygon points="971.7,626.4 994.4,615.0 1136.4,727.7 1112.8,742.9" fill="#7d7972" stroke="#000" stroke-width="0.9" stroke-linejoin="round"/>
<polygon points="1051.0,687.0 1056.0,684.0 1115.0,729.0 1110.0,732.0" fill="#3d3b36" stroke="#000" stroke-width="0.8" stroke-linejoin="round"/>
<polygon points="979.9,625.4 999.1,613.9 1068.5,667.0 1068.9,677.0 1049.5,690.8 980.9,635.4" fill="#000" stroke="#000" stroke-width="1.2" stroke-linejoin="round"/>
<polygon points="979.9,625.4 999.1,613.9 1068.5,667.0 1048.5,680.8" fill="#84807a"/>
<polygon points="979.9,625.4 1048.5,680.8 1049.5,690.8 980.9,635.4" fill="#47443e"/>
<polygon points="1048.5,680.8 1068.5,667.0 1068.9,677.0 1049.5,690.8" fill="#3b3934"/>
<polyline points="979.9,625.4 999.1,613.9 1068.5,667.0 1048.5,680.8 979.9,625.4" fill="none" stroke="#000" stroke-width="1.12" stroke-linejoin="round"/>
<polyline points="1048.5,680.8 1049.5,690.8" fill="none" stroke="#000" stroke-width="1.12" stroke-linejoin="round"/>
<polyline points="1017.6,655.9 1037.3,643.1" fill="none" stroke="#000" stroke-width="1.62" stroke-linejoin="round"/>
<polyline points="1018.6,657.4 1050.0,679.8" fill="none" stroke="#000" stroke-width="0.88" stroke-linejoin="round"/>
<polygon points="1018.0,600.8 1045.5,588.5 1183.8,700.3 1160.1,714.5" fill="#7d7972" stroke="#000" stroke-width="0.9" stroke-linejoin="round"/>
<polygon points="1099.0,660.0 1104.0,657.0 1163.0,700.0 1158.0,703.0" fill="#3d3b36" stroke="#000" stroke-width="0.8" stroke-linejoin="round"/>
<polygon points="1026.6,600.8 1043.6,589.5 1114.7,643.4 1115.1,651.9 1097.7,664.3 1027.6,609.3" fill="#000" stroke="#000" stroke-width="1.2" stroke-linejoin="round"/>
<polygon points="1026.6,600.8 1043.6,589.5 1114.7,643.4 1096.7,655.8" fill="#84807a"/>
<polygon points="1026.6,600.8 1096.7,655.8 1097.7,664.3 1027.6,609.3" fill="#47443e"/>
<polygon points="1096.7,655.8 1114.7,643.4 1115.1,651.9 1097.7,664.3" fill="#3b3934"/>
<polyline points="1026.6,600.8 1043.6,589.5 1114.7,643.4 1096.7,655.8 1026.6,600.8" fill="none" stroke="#000" stroke-width="1.12" stroke-linejoin="round"/>
<polyline points="1096.7,655.8 1097.7,664.3" fill="none" stroke="#000" stroke-width="1.12" stroke-linejoin="round"/>
<polyline points="1065.2,631.0 1082.7,619.1" fill="none" stroke="#000" stroke-width="1.62" stroke-linejoin="round"/>
<polyline points="1066.2,632.5 1098.2,654.8" fill="none" stroke="#000" stroke-width="0.88" stroke-linejoin="round"/>
<polygon points="1138.0,519.0 1145.0,508.6 1265.5,442.7 1436.5,555.4 1442.0,568.0 1312.4,630.0 1307.0,639.0" fill="#6a675f"/>
<polygon points="1145.0,508.6 1265.5,442.7 1436.5,555.4 1310.6,625.6" fill="#85817a"/>
<polyline points="1138.0,519.0 1145.0,508.6 1265.5,442.7" fill="none" stroke="#000" stroke-width="1.25" stroke-linejoin="round"/>
<polyline points="1145.0,508.6 1310.6,625.6 1436.5,555.4" fill="none" stroke="#000" stroke-width="1.25" stroke-linejoin="round"/>
<polyline points="1138.0,519.0 1307.0,639.0 1442.0,568.0" fill="none" stroke="#000" stroke-width="1.25" stroke-linejoin="round"/>
<polyline points="1310.6,625.6 1307.0,639.0" fill="none" stroke="#000" stroke-width="1.12" stroke-linejoin="round"/>
<polygon points="1208.6,537.0 1317.7,476.8 1321.2,481.3 1212.1,542.0" fill="#3b3934" stroke="#000" stroke-width="0.9" stroke-linejoin="round"/>
<polyline points="1212.6,542.8 1321.7,482.1" fill="none" stroke="#9a968e" stroke-width="0.88" stroke-linejoin="round"/>
<polygon points="1222.9,547.0 1332.4,486.6 1335.9,491.1 1226.4,552.0" fill="#3b3934" stroke="#000" stroke-width="0.9" stroke-linejoin="round"/>
<polyline points="1226.9,552.8 1336.4,491.9" fill="none" stroke="#9a968e" stroke-width="0.88" stroke-linejoin="round"/>
<polygon points="1237.2,556.9 1347.0,496.4 1350.5,500.9 1240.7,561.9" fill="#3b3934" stroke="#000" stroke-width="0.9" stroke-linejoin="round"/>
<polyline points="1241.2,562.7 1351.0,501.7" fill="none" stroke="#9a968e" stroke-width="0.88" stroke-linejoin="round"/>
<polygon points="1251.5,566.9 1361.7,506.2 1365.2,510.7 1255.0,571.9" fill="#3b3934" stroke="#000" stroke-width="0.9" stroke-linejoin="round"/>
<polyline points="1255.5,572.7 1365.7,511.5" fill="none" stroke="#9a968e" stroke-width="0.88" stroke-linejoin="round"/>
<polygon points="1265.9,576.8 1376.3,516.1 1379.8,520.6 1269.4,581.8" fill="#3b3934" stroke="#000" stroke-width="0.9" stroke-linejoin="round"/>
<polyline points="1269.9,582.6 1380.3,521.4" fill="none" stroke="#9a968e" stroke-width="0.88" stroke-linejoin="round"/>
<polygon points="1280.2,586.8 1391.0,525.9 1394.5,530.4 1283.7,591.8" fill="#3b3934" stroke="#000" stroke-width="0.9" stroke-linejoin="round"/>
<polyline points="1284.2,592.6 1395.0,531.2" fill="none" stroke="#9a968e" stroke-width="0.88" stroke-linejoin="round"/>
<polygon points="1294.5,596.7 1405.6,535.7 1409.1,540.2 1298.0,601.7" fill="#3b3934" stroke="#000" stroke-width="0.9" stroke-linejoin="round"/>
<polyline points="1298.5,602.5 1409.6,541.0" fill="none" stroke="#9a968e" stroke-width="0.88" stroke-linejoin="round"/>
<polygon points="1308.8,606.7 1420.3,545.5 1423.8,550.0 1312.3,611.7" fill="#3b3934" stroke="#000" stroke-width="0.9" stroke-linejoin="round"/>
<polyline points="1312.8,612.5 1424.3,550.8" fill="none" stroke="#9a968e" stroke-width="0.88" stroke-linejoin="round"/>
<polygon points="1092.8,552.7 1136.1,535.0 1283.9,641.5 1249.8,662.8" fill="#7b776f" stroke="#000" stroke-width="1.0" stroke-linejoin="round"/>
<polygon points="1093.5,552.7 1104.9,547.0 1124.8,562.6 1124.8,568.6 1115.5,575.5 1093.5,559.7" fill="#000" stroke="#000" stroke-width="1.0" stroke-linejoin="round"/>
<polygon points="1093.5,552.7 1104.9,547.0 1124.8,562.6 1115.5,569.0" fill="#827e77"/>
<polygon points="1093.5,552.7 1115.5,569.0 1115.5,575.5 1093.5,559.7" fill="#4f4c46"/>
<polygon points="1115.5,569.0 1124.8,562.6 1124.8,568.6 1115.5,575.5" fill="#5d5a53"/>
<polygon points="1117.6,570.5 1129.0,564.8 1148.9,580.4 1148.9,586.4 1139.6,593.3 1117.6,577.5" fill="#000" stroke="#000" stroke-width="1.0" stroke-linejoin="round"/>
<polygon points="1117.6,570.5 1129.0,564.8 1148.9,580.4 1139.6,586.8" fill="#827e77"/>
<polygon points="1117.6,570.5 1139.6,586.8 1139.6,593.3 1117.6,577.5" fill="#4f4c46"/>
<polygon points="1139.6,586.8 1148.9,580.4 1148.9,586.4 1139.6,593.3" fill="#5d5a53"/>
<polygon points="1141.7,588.3 1153.1,582.6 1173.0,598.2 1173.0,604.2 1163.7,611.1 1141.7,595.3" fill="#000" stroke="#000" stroke-width="1.0" stroke-linejoin="round"/>
<polygon points="1141.7,588.3 1153.1,582.6 1173.0,598.2 1163.7,604.6" fill="#827e77"/>
<polygon points="1141.7,588.3 1163.7,604.6 1163.7,611.1 1141.7,595.3" fill="#4f4c46"/>
<polygon points="1163.7,604.6 1173.0,598.2 1173.0,604.2 1163.7,611.1" fill="#5d5a53"/>
<polygon points="1165.8,606.1 1177.2,600.4 1197.1,616.0 1197.1,622.0 1187.8,628.9 1165.8,613.1" fill="#000" stroke="#000" stroke-width="1.0" stroke-linejoin="round"/>
<polygon points="1165.8,606.1 1177.2,600.4 1197.1,616.0 1187.8,622.4" fill="#827e77"/>
<polygon points="1165.8,606.1 1187.8,622.4 1187.8,628.9 1165.8,613.1" fill="#4f4c46"/>
<polygon points="1187.8,622.4 1197.1,616.0 1197.1,622.0 1187.8,628.9" fill="#5d5a53"/>
<polygon points="1189.9,623.9 1201.3,618.2 1221.2,633.8 1221.2,639.8 1211.9,646.7 1189.9,630.9" fill="#000" stroke="#000" stroke-width="1.0" stroke-linejoin="round"/>
<polygon points="1189.9,623.9 1201.3,618.2 1221.2,633.8 1211.9,640.2" fill="#827e77"/>
<polygon points="1189.9,623.9 1211.9,640.2 1211.9,646.7 1189.9,630.9" fill="#4f4c46"/>
<polygon points="1211.9,640.2 1221.2,633.8 1221.2,639.8 1211.9,646.7" fill="#5d5a53"/>
<polygon points="1214.0,641.7 1225.4,636.0 1245.3,651.6 1245.3,657.6 1236.0,664.5 1214.0,648.7" fill="#000" stroke="#000" stroke-width="1.0" stroke-linejoin="round"/>
<polygon points="1214.0,641.7 1225.4,636.0 1245.3,651.6 1236.0,658.0" fill="#827e77"/>
<polygon points="1214.0,641.7 1236.0,658.0 1236.0,664.5 1214.0,648.7" fill="#4f4c46"/>
<polygon points="1236.0,658.0 1245.3,651.6 1245.3,657.6 1236.0,664.5" fill="#5d5a53"/>
<polyline points="1111.0,549.0 1136.1,536.5 1158.0,552.0 1133.0,565.0 1111.0,549.0" fill="none" stroke="#000" stroke-width="1.12" stroke-linejoin="round"/>
<polyline points="1151.8,562.6 1158.9,559.8 1170.2,569.7 1163.1,573.3 1151.8,562.6" fill="none" stroke="#000" stroke-width="1.00" stroke-linejoin="round"/>
<polyline points="1135.1,566.8 1160.2,554.3 1182.1,569.8 1157.1,582.8 1135.1,566.8" fill="none" stroke="#000" stroke-width="1.12" stroke-linejoin="round"/>
<polyline points="1175.9,580.4 1183.0,577.6 1194.3,587.5 1187.2,591.1 1175.9,580.4" fill="none" stroke="#000" stroke-width="1.00" stroke-linejoin="round"/>
<polyline points="1159.2,584.6 1184.3,572.1 1206.2,587.6 1181.2,600.6 1159.2,584.6" fill="none" stroke="#000" stroke-width="1.12" stroke-linejoin="round"/>
<polyline points="1200.0,598.2 1207.1,595.4 1218.4,605.3 1211.3,608.9 1200.0,598.2" fill="none" stroke="#000" stroke-width="1.00" stroke-linejoin="round"/>
<polyline points="1183.3,602.4 1208.4,589.9 1230.3,605.4 1205.3,618.4 1183.3,602.4" fill="none" stroke="#000" stroke-width="1.12" stroke-linejoin="round"/>
<polyline points="1224.1,616.0 1231.2,613.2 1242.5,623.1 1235.4,626.7 1224.1,616.0" fill="none" stroke="#000" stroke-width="1.00" stroke-linejoin="round"/>
<polyline points="1207.4,620.2 1232.5,607.7 1254.4,623.2 1229.4,636.2 1207.4,620.2" fill="none" stroke="#000" stroke-width="1.12" stroke-linejoin="round"/>
<polyline points="1248.2,633.8 1255.3,631.0 1266.6,640.9 1259.5,644.5 1248.2,633.8" fill="none" stroke="#000" stroke-width="1.00" stroke-linejoin="round"/>
<polyline points="1231.5,638.0 1256.6,625.5 1278.5,641.0 1253.5,654.0 1231.5,638.0" fill="none" stroke="#000" stroke-width="1.12" stroke-linejoin="round"/>
</svg>
</div>
<div class="a" style="left:0;top:0;width:1920px;height:8px;background:#000"></div>
<div class="a" style="left:0;top:8px;width:1920px;height:23px;background:#fff"></div>
<svg class="a" style="left:2px;top:11px" width="17" height="17" viewBox="0 0 17 17"><rect x="0" y="0" width="17" height="17" fill="#f6dcc4"/><path d="M4 3h8v3H7v2h4v3H7v4H4z" fill="#e07b22"/></svg>
<svg class="a" style="left:1790px;top:8px" width="130" height="23" viewBox="0 0 130 23"><path d="M8.5 10.5h11" stroke="#000" stroke-width="1"/><path d="M54.5 7.5h8v8h-8z M56.5 7.5v-2h8v8h-2" fill="none" stroke="#000" stroke-width="1"/><path d="M100 5l10.5 10.5M110.5 5L100 15.5" stroke="#000" stroke-width="1.1"/></svg>
<div class="a" style="left:0;top:31px;width:1920px;height:32px;background:#c9c9c9"></div>
<div class="a" style="left:193px;top:35px;width:1478px;height:28px;background:#f0f0f0;border-radius:5px 5px 0 0"></div>
<svg class="a" style="left:0;top:31px" width="200" height="32" viewBox="0 0 200 32">
<g fill="#5c5c5c"><rect x="9" y="9" width="4" height="4" rx=".6"/><rect x="14" y="9" width="4" height="4" rx=".6"/><rect x="19" y="9" width="4" height="4" rx=".6"/><rect x="9" y="14" width="4" height="4" rx=".6"/><rect x="14" y="14" width="4" height="4" rx=".6"/><rect x="19" y="14" width="4" height="4" rx=".6"/><rect x="9" y="19" width="4" height="4" rx=".6"/><rect x="14" y="19" width="4" height="4" rx=".6"/><rect x="19" y="19" width="4" height="4" rx=".6"/></g>
<path d="M42 8h8l4 4v11h-12z" fill="#5c5c5c"/><path d="M61 12h7l-3.5 4z" fill="#5c5c5c"/>
<path d="M87 9h13v14h-12l-1-1z" fill="#8a8a8a"/><path d="M90 9v4h7V9M90 23v-4h7v4" fill="none" stroke="#c9c9c9" stroke-width="1.2"/>
<path d="M121 15l4-4M121 15l4 4M121 15h6a5 5 0 0 1 5 5v2" fill="none" stroke="#5c5c5c" stroke-width="1.8"/><path d="M140 13h7l-3.5 4z" fill="#5c5c5c"/>
<path d="M172 15l-4-4M172 15l-4 4M172 15h-6a5 5 0 0 0-5 5v2" fill="none" stroke="#8a8a8a" stroke-width="1.8"/><path d="M179 13h7l-3.5 4z" fill="#8a8a8a"/>
</svg>
<svg class="a" style="left:879px;top:42px" width="17" height="14" viewBox="0 0 17 14"><path d="M1 2l7-2 8 2v9l-7 3-8-3z" fill="#777"/><path d="M9 4l7-2v9l-7 3z" fill="#555"/><path d="M1 2l8 2v10" fill="none" stroke="#999" stroke-width=".6"/></svg>
<svg class="a" style="left:1654px;top:43px" width="12" height="12" viewBox="0 0 12 12"><path d="M1.5 1.5l9 9M10.5 1.5l-9 9" stroke="#666" stroke-width="1.3"/></svg>
<div class="a" style="left:1675px;top:35px;width:28px;height:28px;background:#bcbcbc;border-radius:4px 4px 0 0"></div>
<svg class="a" style="left:1675px;top:35px" width="28" height="28" viewBox="0 0 28 28"><path d="M14 8v12M8 14h12" stroke="#666" stroke-width="2.4"/></svg>
<svg class="a" style="left:1713px;top:38px" width="20" height="20" viewBox="0 0 20 20"><path d="M2 3h8l4 3v3l-5 6-1 4H2z" fill="#555"/><path d="M9 16l7-9 2 2-7 9-3 1z" fill="#555" stroke="#c9c9c9" stroke-width=".8"/></svg>
<svg class="a" style="left:1778px;top:38px" width="20" height="20" viewBox="0 0 20 20"><circle cx="10" cy="10" r="7.5" fill="none" stroke="#5c5c5c" stroke-width="1.6"/><circle cx="10" cy="10" r="5.5" fill="#c9c9c9" stroke="#5c5c5c" stroke-width=".6"/><path d="M10 6v4h3.5" fill="none" stroke="#5c5c5c" stroke-width="1.4"/></svg>
<svg class="a" style="left:1812px;top:38px" width="18" height="20" viewBox="0 0 18 20"><path d="M9 2c-3 0-5 2.5-5 6v4l-2 3h14l-2-3V8c0-3.5-2-6-5-6z" fill="#555"/><circle cx="9" cy="17" r="2" fill="#555"/><rect x="8" y="1" width="2" height="2" fill="#555"/></svg>
<svg class="a" style="left:1845px;top:39px" width="18" height="18" viewBox="0 0 18 18"><circle cx="9" cy="9" r="8.3" fill="#5c5c5c"/><path d="M6.2 7a2.8 2.8 0 1 1 4 2.5c-1 .6-1.2 1-1.2 2" fill="none" stroke="#fff" stroke-width="2"/><circle cx="9" cy="14" r="1.2" fill="#fff"/></svg>
<div class="a" style="left:1882px;top:35px;width:25px;height:25px;border-radius:50%;background:#ececec;font-size:12px;line-height:25px;text-align:center;color:#333"></div>
<div class="a" style="left:0;top:63px;width:1920px;height:81px;background:#f0f0f0"></div>
<div class="a" style="left:0;top:144px;width:1920px;height:1px;background:#dcdcdc"></div>
<div class="a" style="left:12px;top:73px;width:109px;height:61px;border:1.5px solid #dadada;border-radius:6px"></div>
<div class="a" style="left:138px;top:84px;width:56px;height:3px;background:#0696d7;border-radius:1px"></div>
<svg class="a" style="left:130px;top:85px" width="820" height="56" viewBox="130 85 820 56">
<g fill="#d8d8d8" stroke="#555" stroke-width="0.8">
</g>
<!-- separators -->
<g stroke="#d0d0d0" stroke-width="1"><path d="M351.5 89v50M620.5 89v50M716.5 89v50M775.5 89v50M834.5 89v50M894.5 89v50"/></g>
<!-- sketch -->
<rect x="138.5" y="91.5" width="27" height="27" fill="none" stroke="#555" stroke-width="0.9"/>
<g fill="#555"><rect x="137" y="90" width="3" height="3"/><rect x="164" y="90" width="3" height="3"/><rect x="137" y="117" width="3" height="3"/><rect x="145" y="97" width="2.5" height="2.5"/><rect x="157" y="97" width="2.5" height="2.5"/><rect x="145" y="109" width="2.5" height="2.5"/></g>
<path d="M146 99v11M147 98h11M158 99c0 6-5 11-11 11" fill="none" stroke="#555" stroke-width="0.9"/>
<path d="M152 111h16M160 103v16" stroke="#1ea03c" stroke-width="3.4"/>
<!-- extrude -->
<path d="M181 94l5-4h16v24l-5 4h-16z" fill="#63a8e0"/><path d="M197 94l5-4v24l-5 4z" fill="#3e8ccc"/><path d="M181 94l5-4h16l-5 4z" fill="#8cc4f0"/>
<path d="M181 118h16l5-4v3l-5 4h-16z" fill="#c8c8c8"/>
<path d="M208 119V90M205.5 94l2.5-5 2.5 5" fill="none" stroke="#333" stroke-width="1"/>
<!-- revolve -->
<path d="M224 110c0-6 7-10 14-10s14 4 14 10v5c0-6-7-9-14-9s-14 3-14 9z" fill="#3e8ccc"/>
<path d="M224 104c2-5 8-8 14-8s12 3 14 8v6c-2-5-8-8-14-8s-12 3-14 8z" fill="#8cc4f0"/>
<path d="M248 104l5-2v12l-5 3z" fill="#fff" stroke="#555" stroke-width="0.8"/>
<path d="M227 96c6-5 18-5 25 0" fill="none" stroke="#555" stroke-width="1"/><path d="M226 97l3-4 1 3z" fill="#555"/>
<!-- hole -->
<path d="M266 96l5-5h26v27l-5 5h-26z" fill="#e8e8e8" stroke="#666" stroke-width="0.9"/><path d="M266 96h26v27M292 96l5-5" fill="none" stroke="#666" stroke-width="0.9"/><path d="M292 96l5-5v27l-5 5z" fill="#c8c8c8" stroke="#666" stroke-width="0.9"/>
<circle cx="279" cy="110" r="8" fill="#fff" stroke="#666" stroke-width="1"/><path d="M279 103a7 7 0 1 0 7 7a6 6 0 0 1-7-7z" fill="#4b9ad8"/>
<!-- pattern -->
<rect x="309" y="93" width="5" height="5" fill="#fff" stroke="#666" stroke-width=".9"/><rect x="330" y="93" width="5" height="5" fill="#4b9ad8"/><rect x="309" y="114" width="5" height="5" fill="#4b9ad8"/><rect x="330" y="114" width="5" height="5" fill="#4b9ad8"/>
<path d="M314.5 95.5h15M311.5 98.5v15M314.5 116.5h15" stroke="#666" stroke-width=".9"/>
<!-- press pull -->
<path d="M364 122V96l6-6h8v32z" fill="#ddd" stroke="#555" stroke-width="1"/>
<path d="M371 96l6-6h9v26l-6 6h-9z" fill="#63a8e0"/><path d="M380 96l6-6v26l-6 6z" fill="#3e8ccc"/><path d="M371 96l6-6h9l-6 6z" fill="#8cc4f0"/>
<path d="M383 105.5h8M388.5 102.5l3 3-3 3" fill="none" stroke="#222" stroke-width="1.2"/>
<!-- fillet -->
<path d="M406 122V97l6-6h10l-2 5c8 0 15 7 15 15v5l-6 6z" fill="#dcdcdc" stroke="#555" stroke-width="1"/>
<path d="M420 96l3-6c8 1 14 7 15 15l-4 5c-1-8-6-13-14-14z" fill="#63a8e0"/>
<path d="M429 116l6-6v6l-6 6z" fill="#b8b8b8"/>
<!-- shell -->
<path d="M449 122V97l7-7h25v25l-7 7z" fill="#e8e8e8" stroke="#555" stroke-width="1"/><path d="M474 97l7-7v25l-7 7z" fill="#bdbdbd" stroke="#555" stroke-width=".8"/><path d="M449 97h25v25" fill="none" stroke="#555" stroke-width=".8"/>
<rect x="453" y="101" width="17" height="17" fill="#fff"/><path d="M453 101h6v12h11v5h-17z" fill="#3e8ccc"/><path d="M459 113h11v5h-17z" fill="#8cc4f0"/>
<!-- combine -->
<path d="M508 96l4-5h13v18l-4 5h-13z" fill="#63a8e0"/><path d="M521 96l4-5v18l-4 5z" fill="#3e8ccc"/><path d="M508 96l4-5h13l-4 5z" fill="#8cc4f0"/>
<path d="M492 106l3-3h13v14l-4 5h-12z" fill="#63a8e0"/><path d="M504 114l4-5v9l-4 4z" fill="#3e8ccc"/><path d="M492 106l3-3h10l-3 3z" fill="#8cc4f0"/>
<path d="M504 109h17v5h-17z" fill="#63a8e0"/>
<!-- offset face -->
<path d="M537 96l5-6h22v12l-5 6h-22z" fill="#63a8e0"/><path d="M559 96l5-6v12l-5 6z" fill="#3e8ccc"/><path d="M537 96l5-6h22l-5 6z" fill="#8cc4f0"/>
<path d="M535 108.5h24l7-7" fill="none" stroke="#1a8fe0" stroke-width="1"/>
<path d="M537 112h22v9h-22z" fill="#dcdcdc" stroke="#555" stroke-width=".9"/><path d="M559 112l5-5v9l-5 5z" fill="#b8b8b8" stroke="#555" stroke-width=".9"/>
<!-- move -->
<path d="M594 92v28M580 106h28" stroke="#222" stroke-width="2"/><path d="M594 89l-5 6.5h10zM594 123l-5-6.5h10zM577 106l6.5-5v10zM611 106l-6.5-5v10z" fill="#222"/>
<!-- assembly new component -->
<path d="M632 104l3-3h14v13h-17z" fill="#63a8e0"/><rect x="632" y="105" width="12" height="13" fill="#e0e0e0" stroke="#666" stroke-width=".8"/><rect x="645" y="105" width="12" height="13" fill="#e0e0e0" stroke="#666" stroke-width=".8"/><path d="M632 95l4-3h10v12h-14z" fill="#4b9ad8"/>
<path d="M655 89l1.5 4.5 4.5-1.5-2.5 4 4 2.5-4.5 1 1 4.5-4-2.5-3 3.5-.5-4.5-4.5.5 3-3.5-3.5-3 4.5-.5z" fill="#f2a516"/>
<!-- joint -->
<path d="M678 119V97c0-4 3-7 6-7s4 3 4 6v21z" fill="#e0e0e0" stroke="#666" stroke-width=".8"/><path d="M694 98l10 8v14l-10-5z" fill="#e0e0e0" stroke="#666" stroke-width=".8"/><path d="M692 104v5" stroke="#4b9ad8" stroke-width="1"/><path d="M683 108v7" stroke="#4b9ad8" stroke-width="1"/>
<!-- construct -->
<path d="M731 97l8-6v23l-8 6z" fill="#e0e0e0" stroke="#666" stroke-width=".8"/><path d="M739 97l8-6v23l-8 6z" fill="#52b35d"/><path d="M752 97l9-6v23l-9 6z" fill="#e5955a"/>
<!-- measure -->
<path d="M793 98.5h26M793 95v7M819 95v7" fill="none" stroke="#555" stroke-width="1"/><path d="M795 98.5l4-2v4zM817 98.5l-4-2v4z" fill="#555"/>
<rect x="792" y="106" width="28" height="7" fill="#f2a516"/><path d="M795 106v3M799 106v2M803 106v3M807 106v2M811 106v3M815 106v2" stroke="#a86800" stroke-width=".8"/>
<!-- insert -->
<rect x="850" y="91" width="29" height="29" fill="#4b9ad8"/><rect x="851.5" y="92.5" width="26" height="26" fill="#5eaee6"/><path d="M851 118c5-10 9-13 13-8s6 2 9-1 4 0 5 2v7z" fill="#2f7cbf"/><circle cx="870" cy="99" r="3" fill="#fff6c8"/>
<!-- select -->
<rect x="905" y="87" width="38" height="38" fill="#0a8fd4"/><rect x="909" y="91" width="28" height="22" fill="none" stroke="#7fe07f" stroke-width="1" stroke-dasharray="3 2"/><path d="M930 104l0 16 4-4 3 6 2-1-3-6 5 0z" fill="#fff" stroke="#0a6aa0" stroke-width=".6"/>
</svg>
<div class="a" style="left:0;top:1048px;width:1920px;height:8px;background:#111"></div>
<div class="a" style="left:48px;top:1048px;width:344px;height:8px;background:#f0f0f0"></div>
<div class="a" style="left:735px;top:1048px;width:48px;height:8px;background:#333"></div>
<div class="a" style="left:1920px;top:0;width:8px;height:1056px;background:#f8f8f8"></div>
<div class="a" style="left:1920px;top:0;width:8px;height:26px;background:#fff"></div>

<svg class="a" style="left:0;top:0" width="960" height="145" viewBox="0 0 960 145"><g fill="#333"><path d="M244.5 131h6l-3 4z"/><path d="M492.5 131h6l-3 4z"/><path d="M684.5 131h6l-3 4z"/><path d="M755 131h6l-3 4z"/><path d="M813.5 131h6l-3 4z"/><path d="M872.5 131h6l-3 4z"/><path d="M932 131h6l-3 4z"/><path d="M85 100h6l-3 4z" fill="#222"/></g></svg>

<div class="a" style="left:4px;top:149px;width:300px;height:25px;background:#f0f0f0;border:1px solid #d4d4d4"></div>
<svg class="a" style="left:8px;top:156px" width="14" height="10" viewBox="0 0 14 10"><path d="M1 5l5-3.5v7zM6.5 5l5-3.5v7z" fill="#333"/></svg>
<svg class="a" style="left:281px;top:155px" width="24" height="12" viewBox="0 0 24 12"><circle cx="6" cy="6" r="5.2" fill="#222"/><path d="M3 6h6" stroke="#fff" stroke-width="1.6"/><path d="M18.5 1v10M20.5 2v8" stroke="#888" stroke-width=".8"/></svg>
<div class="a" style="left:8px;top:179px;width:6px;height:816px;background:#c9c9c9"></div>
<div class="a" style="left:8px;top:233px;width:6px;height:137px;background:#a9a9a9;border-radius:1px"></div>
<div class="a" style="left:58px;top:178px;width:90px;height:20px;background:rgba(240,240,240,.88)"></div>
<svg class="a" style="left:37px;top:181px" width="14" height="14" viewBox="0 0 14 14"><path d="M1.5 12.5L12 2v10.5z" fill="#666" stroke="#333" stroke-width="1"/><path d="M4 12L12 4v8z" fill="#ddd"/></svg>
<svg class="a" style="left:61px;top:183px" width="17" height="11" viewBox="0 0 17 11"><path d="M.5 5.5C3 1.5 6 .5 8.5.5s5.5 1 8 5c-2.5 4-5.5 5-8 5s-5.5-1-8-5z" fill="#9a9a9a"/><circle cx="8.5" cy="5.5" r="2.8" fill="#f0f0f0"/><circle cx="8.5" cy="5.5" r="1.6" fill="#9a9a9a"/></svg>
<svg class="a" style="left:86px;top:181px" width="17" height="14" viewBox="0 0 17 14"><path d="M0 1h6l1 1.5h10V14H0z" fill="#8e8e8e"/><path d="M0 3.5h17" stroke="#a8a8a8" stroke-width=".8"/></svg>
<div class="a" style="left:76px;top:202px;width:110px;height:20px;background:rgba(240,240,240,.88)"></div>
<svg class="a" style="left:79px;top:207px" width="17" height="11" viewBox="0 0 17 11"><path d="M.5 5.5C3 1.5 6 .5 8.5.5s5.5 1 8 5c-2.5 4-5.5 5-8 5s-5.5-1-8-5z" fill="#9a9a9a"/><circle cx="8.5" cy="5.5" r="2.8" fill="#f0f0f0"/><circle cx="8.5" cy="5.5" r="1.6" fill="#9a9a9a"/></svg>
<svg class="a" style="left:104px;top:204px" width="17" height="17" viewBox="0 0 17 17"><defs><linearGradient id="bg0" x1="0" x2="1"><stop offset="0" stop-color="#f4f4f4"/><stop offset=".5" stop-color="#e0e0e0"/><stop offset="1" stop-color="#b8b8b8"/></linearGradient></defs><rect x="1.5" y="1.5" width="14" height="14" rx="3" fill="url(#bg0)" stroke="#555" stroke-width="1"/><path d="M2 4.5c3 1.5 10 1.5 13 0" fill="none" stroke="#888" stroke-width=".6"/></svg>
<div class="a" style="left:76px;top:226px;width:110px;height:20px;background:rgba(240,240,240,.88)"></div>
<svg class="a" style="left:79px;top:231px" width="17" height="11" viewBox="0 0 17 11"><path d="M.5 5.5C3 1.5 6 .5 8.5.5s5.5 1 8 5c-2.5 4-5.5 5-8 5s-5.5-1-8-5z" fill="#9a9a9a"/><circle cx="8.5" cy="5.5" r="2.8" fill="#f0f0f0"/><circle cx="8.5" cy="5.5" r="1.6" fill="#9a9a9a"/></svg>
<svg class="a" style="left:104px;top:228px" width="17" height="17" viewBox="0 0 17 17"><defs><linearGradient id="bg1" x1="0" x2="1"><stop offset="0" stop-color="#f4f4f4"/><stop offset=".5" stop-color="#e0e0e0"/><stop offset="1" stop-color="#b8b8b8"/></linearGradient></defs><rect x="1.5" y="1.5" width="14" height="14" rx="3" fill="url(#bg1)" stroke="#555" stroke-width="1"/><path d="M2 4.5c3 1.5 10 1.5 13 0" fill="none" stroke="#888" stroke-width=".6"/></svg>
<div class="a" style="left:76px;top:250px;width:110px;height:20px;background:rgba(240,240,240,.88)"></div>
<svg class="a" style="left:79px;top:255px" width="17" height="11" viewBox="0 0 17 11"><path d="M.5 5.5C3 1.5 6 .5 8.5.5s5.5 1 8 5c-2.5 4-5.5 5-8 5s-5.5-1-8-5z" fill="#9a9a9a"/><circle cx="8.5" cy="5.5" r="2.8" fill="#f0f0f0"/><circle cx="8.5" cy="5.5" r="1.6" fill="#9a9a9a"/></svg>
<svg class="a" style="left:104px;top:252px" width="17" height="17" viewBox="0 0 17 17"><defs><linearGradient id="bg2" x1="0" x2="1"><stop offset="0" stop-color="#f4f4f4"/><stop offset=".5" stop-color="#e0e0e0"/><stop offset="1" stop-color="#b8b8b8"/></linearGradient></defs><rect x="1.5" y="1.5" width="14" height="14" rx="3" fill="url(#bg2)" stroke="#555" stroke-width="1"/><path d="M2 4.5c3 1.5 10 1.5 13 0" fill="none" stroke="#888" stroke-width=".6"/></svg>
<div class="a" style="left:76px;top:274px;width:110px;height:20px;background:rgba(240,240,240,.88)"></div>
<svg class="a" style="left:79px;top:279px" width="17" height="11" viewBox="0 0 17 11"><path d="M.5 5.5C3 1.5 6 .5 8.5.5s5.5 1 8 5c-2.5 4-5.5 5-8 5s-5.5-1-8-5z" fill="#9a9a9a"/><circle cx="8.5" cy="5.5" r="2.8" fill="#f0f0f0"/><circle cx="8.5" cy="5.5" r="1.6" fill="#9a9a9a"/></svg>
<svg class="a" style="left:104px;top:276px" width="17" height="17" viewBox="0 0 17 17"><defs><linearGradient id="bg3" x1="0" x2="1"><stop offset="0" stop-color="#f4f4f4"/><stop offset=".5" stop-color="#e0e0e0"/><stop offset="1" stop-color="#b8b8b8"/></linearGradient></defs><rect x="1.5" y="1.5" width="14" height="14" rx="3" fill="url(#bg3)" stroke="#555" stroke-width="1"/><path d="M2 4.5c3 1.5 10 1.5 13 0" fill="none" stroke="#888" stroke-width=".6"/></svg>
<div class="a" style="left:76px;top:298px;width:110px;height:20px;background:rgba(240,240,240,.88)"></div>
<svg class="a" style="left:79px;top:303px" width="17" height="11" viewBox="0 0 17 11"><path d="M.5 5.5C3 1.5 6 .5 8.5.5s5.5 1 8 5c-2.5 4-5.5 5-8 5s-5.5-1-8-5z" fill="#9a9a9a"/><circle cx="8.5" cy="5.5" r="2.8" fill="#f0f0f0"/><circle cx="8.5" cy="5.5" r="1.6" fill="#9a9a9a"/></svg>
<svg class="a" style="left:104px;top:300px" width="17" height="17" viewBox="0 0 17 17"><defs><linearGradient id="bg4" x1="0" x2="1"><stop offset="0" stop-color="#f4f4f4"/><stop offset=".5" stop-color="#e0e0e0"/><stop offset="1" stop-color="#b8b8b8"/></linearGradient></defs><rect x="1.5" y="1.5" width="14" height="14" rx="3" fill="url(#bg4)" stroke="#555" stroke-width="1"/><path d="M2 4.5c3 1.5 10 1.5 13 0" fill="none" stroke="#888" stroke-width=".6"/></svg>
<div class="a" style="left:76px;top:322px;width:110px;height:20px;background:rgba(240,240,240,.88)"></div>
<svg class="a" style="left:79px;top:327px" width="17" height="11" viewBox="0 0 17 11"><path d="M.5 5.5C3 1.5 6 .5 8.5.5s5.5 1 8 5c-2.5 4-5.5 5-8 5s-5.5-1-8-5z" fill="#9a9a9a"/><circle cx="8.5" cy="5.5" r="2.8" fill="#f0f0f0"/><circle cx="8.5" cy="5.5" r="1.6" fill="#9a9a9a"/></svg>
<svg class="a" style="left:104px;top:324px" width="17" height="17" viewBox="0 0 17 17"><defs><linearGradient id="bg5" x1="0" x2="1"><stop offset="0" stop-color="#f4f4f4"/><stop offset=".5" stop-color="#e0e0e0"/><stop offset="1" stop-color="#b8b8b8"/></linearGradient></defs><rect x="1.5" y="1.5" width="14" height="14" rx="3" fill="url(#bg5)" stroke="#555" stroke-width="1"/><path d="M2 4.5c3 1.5 10 1.5 13 0" fill="none" stroke="#888" stroke-width=".6"/></svg>
<div class="a" style="left:76px;top:346px;width:110px;height:20px;background:rgba(240,240,240,.88)"></div>
<svg class="a" style="left:79px;top:351px" width="17" height="11" viewBox="0 0 17 11"><path d="M.5 5.5C3 1.5 6 .5 8.5.5s5.5 1 8 5c-2.5 4-5.5 5-8 5s-5.5-1-8-5z" fill="#9a9a9a"/><circle cx="8.5" cy="5.5" r="2.8" fill="#f0f0f0"/><circle cx="8.5" cy="5.5" r="1.6" fill="#9a9a9a"/></svg>
<svg class="a" style="left:104px;top:348px" width="17" height="17" viewBox="0 0 17 17"><defs><linearGradient id="bg6" x1="0" x2="1"><stop offset="0" stop-color="#f4f4f4"/><stop offset=".5" stop-color="#e0e0e0"/><stop offset="1" stop-color="#b8b8b8"/></linearGradient></defs><rect x="1.5" y="1.5" width="14" height="14" rx="3" fill="url(#bg6)" stroke="#555" stroke-width="1"/><path d="M2 4.5c3 1.5 10 1.5 13 0" fill="none" stroke="#888" stroke-width=".6"/></svg>
<div class="a" style="left:76px;top:370px;width:110px;height:20px;background:rgba(240,240,240,.88)"></div>
<svg class="a" style="left:79px;top:375px" width="17" height="11" viewBox="0 0 17 11"><path d="M.5 5.5C3 1.5 6 .5 8.5.5s5.5 1 8 5c-2.5 4-5.5 5-8 5s-5.5-1-8-5z" fill="#9a9a9a"/><circle cx="8.5" cy="5.5" r="2.8" fill="#f0f0f0"/><circle cx="8.5" cy="5.5" r="1.6" fill="#9a9a9a"/></svg>
<svg class="a" style="left:104px;top:372px" width="17" height="17" viewBox="0 0 17 17"><defs><linearGradient id="bg7" x1="0" x2="1"><stop offset="0" stop-color="#f4f4f4"/><stop offset=".5" stop-color="#e0e0e0"/><stop offset="1" stop-color="#b8b8b8"/></linearGradient></defs><rect x="1.5" y="1.5" width="14" height="14" rx="3" fill="url(#bg7)" stroke="#555" stroke-width="1"/><path d="M2 4.5c3 1.5 10 1.5 13 0" fill="none" stroke="#888" stroke-width=".6"/></svg>
<div class="a" style="left:76px;top:394px;width:110px;height:20px;background:rgba(240,240,240,.88)"></div>
<svg class="a" style="left:79px;top:399px" width="17" height="11" viewBox="0 0 17 11"><path d="M.5 5.5C3 1.5 6 .5 8.5.5s5.5 1 8 5c-2.5 4-5.5 5-8 5s-5.5-1-8-5z" fill="#9a9a9a"/><circle cx="8.5" cy="5.5" r="2.8" fill="#f0f0f0"/><circle cx="8.5" cy="5.5" r="1.6" fill="#9a9a9a"/></svg>
<svg class="a" style="left:104px;top:396px" width="17" height="17" viewBox="0 0 17 17"><defs><linearGradient id="bg8" x1="0" x2="1"><stop offset="0" stop-color="#f4f4f4"/><stop offset=".5" stop-color="#e0e0e0"/><stop offset="1" stop-color="#b8b8b8"/></linearGradient></defs><rect x="1.5" y="1.5" width="14" height="14" rx="3" fill="url(#bg8)" stroke="#555" stroke-width="1"/><path d="M2 4.5c3 1.5 10 1.5 13 0" fill="none" stroke="#888" stroke-width=".6"/></svg>
<div class="a" style="left:76px;top:418px;width:110px;height:20px;background:rgba(240,240,240,.88)"></div>
<svg class="a" style="left:79px;top:423px" width="17" height="11" viewBox="0 0 17 11"><path d="M.5 5.5C3 1.5 6 .5 8.5.5s5.5 1 8 5c-2.5 4-5.5 5-8 5s-5.5-1-8-5z" fill="#9a9a9a"/><circle cx="8.5" cy="5.5" r="2.8" fill="#f0f0f0"/><circle cx="8.5" cy="5.5" r="1.6" fill="#9a9a9a"/></svg>
<svg class="a" style="left:104px;top:420px" width="17" height="17" viewBox="0 0 17 17"><defs><linearGradient id="bg9" x1="0" x2="1"><stop offset="0" stop-color="#f4f4f4"/><stop offset=".5" stop-color="#e0e0e0"/><stop offset="1" stop-color="#b8b8b8"/></linearGradient></defs><rect x="1.5" y="1.5" width="14" height="14" rx="3" fill="url(#bg9)" stroke="#555" stroke-width="1"/><path d="M2 4.5c3 1.5 10 1.5 13 0" fill="none" stroke="#888" stroke-width=".6"/></svg>
<div class="a" style="left:76px;top:442px;width:110px;height:20px;background:rgba(240,240,240,.88)"></div>
<svg class="a" style="left:79px;top:447px" width="17" height="11" viewBox="0 0 17 11"><path d="M.5 5.5C3 1.5 6 .5 8.5.5s5.5 1 8 5c-2.5 4-5.5 5-8 5s-5.5-1-8-5z" fill="#9a9a9a"/><circle cx="8.5" cy="5.5" r="2.8" fill="#f0f0f0"/><circle cx="8.5" cy="5.5" r="1.6" fill="#9a9a9a"/></svg>
<svg class="a" style="left:104px;top:444px" width="17" height="17" viewBox="0 0 17 17"><defs><linearGradient id="bg10" x1="0" x2="1"><stop offset="0" stop-color="#f4f4f4"/><stop offset=".5" stop-color="#e0e0e0"/><stop offset="1" stop-color="#b8b8b8"/></linearGradient></defs><rect x="1.5" y="1.5" width="14" height="14" rx="3" fill="url(#bg10)" stroke="#555" stroke-width="1"/><path d="M2 4.5c3 1.5 10 1.5 13 0" fill="none" stroke="#888" stroke-width=".6"/></svg>
<div class="a" style="left:76px;top:466px;width:110px;height:20px;background:rgba(240,240,240,.88)"></div>
<svg class="a" style="left:79px;top:471px" width="17" height="11" viewBox="0 0 17 11"><path d="M.5 5.5C3 1.5 6 .5 8.5.5s5.5 1 8 5c-2.5 4-5.5 5-8 5s-5.5-1-8-5z" fill="#9a9a9a"/><circle cx="8.5" cy="5.5" r="2.8" fill="#f0f0f0"/><circle cx="8.5" cy="5.5" r="1.6" fill="#9a9a9a"/></svg>
<svg class="a" style="left:104px;top:468px" width="17" height="17" viewBox="0 0 17 17"><defs><linearGradient id="bg11" x1="0" x2="1"><stop offset="0" stop-color="#f4f4f4"/><stop offset=".5" stop-color="#e0e0e0"/><stop offset="1" stop-color="#b8b8b8"/></linearGradient></defs><rect x="1.5" y="1.5" width="14" height="14" rx="3" fill="url(#bg11)" stroke="#555" stroke-width="1"/><path d="M2 4.5c3 1.5 10 1.5 13 0" fill="none" stroke="#888" stroke-width=".6"/></svg>
<div class="a" style="left:76px;top:490px;width:110px;height:20px;background:rgba(240,240,240,.88)"></div>
<svg class="a" style="left:79px;top:495px" width="17" height="11" viewBox="0 0 17 11"><path d="M.5 5.5C3 1.5 6 .5 8.5.5s5.5 1 8 5c-2.5 4-5.5 5-8 5s-5.5-1-8-5z" fill="#9a9a9a"/><circle cx="8.5" cy="5.5" r="2.8" fill="#f0f0f0"/><circle cx="8.5" cy="5.5" r="1.6" fill="#9a9a9a"/></svg>
<svg class="a" style="left:104px;top:492px" width="17" height="17" viewBox="0 0 17 17"><defs><linearGradient id="bg12" x1="0" x2="1"><stop offset="0" stop-color="#f4f4f4"/><stop offset=".5" stop-color="#e0e0e0"/><stop offset="1" stop-color="#b8b8b8"/></linearGradient></defs><rect x="1.5" y="1.5" width="14" height="14" rx="3" fill="url(#bg12)" stroke="#555" stroke-width="1"/><path d="M2 4.5c3 1.5 10 1.5 13 0" fill="none" stroke="#888" stroke-width=".6"/></svg>
<div class="a" style="left:76px;top:514px;width:110px;height:20px;background:rgba(240,240,240,.88)"></div>
<svg class="a" style="left:79px;top:519px" width="17" height="11" viewBox="0 0 17 11"><path d="M.5 5.5C3 1.5 6 .5 8.5.5s5.5 1 8 5c-2.5 4-5.5 5-8 5s-5.5-1-8-5z" fill="#9a9a9a"/><circle cx="8.5" cy="5.5" r="2.8" fill="#f0f0f0"/><circle cx="8.5" cy="5.5" r="1.6" fill="#9a9a9a"/></svg>
<svg class="a" style="left:104px;top:516px" width="17" height="17" viewBox="0 0 17 17"><defs><linearGradient id="bg13" x1="0" x2="1"><stop offset="0" stop-color="#f4f4f4"/><stop offset=".5" stop-color="#e0e0e0"/><stop offset="1" stop-color="#b8b8b8"/></linearGradient></defs><rect x="1.5" y="1.5" width="14" height="14" rx="3" fill="url(#bg13)" stroke="#555" stroke-width="1"/><path d="M2 4.5c3 1.5 10 1.5 13 0" fill="none" stroke="#888" stroke-width=".6"/></svg>
<div class="a" style="left:76px;top:538px;width:110px;height:20px;background:rgba(240,240,240,.88)"></div>
<svg class="a" style="left:79px;top:543px" width="17" height="11" viewBox="0 0 17 11"><path d="M.5 5.5C3 1.5 6 .5 8.5.5s5.5 1 8 5c-2.5 4-5.5 5-8 5s-5.5-1-8-5z" fill="#9a9a9a"/><circle cx="8.5" cy="5.5" r="2.8" fill="#f0f0f0"/><circle cx="8.5" cy="5.5" r="1.6" fill="#9a9a9a"/></svg>
<svg class="a" style="left:104px;top:540px" width="17" height="17" viewBox="0 0 17 17"><defs><linearGradient id="bg14" x1="0" x2="1"><stop offset="0" stop-color="#f4f4f4"/><stop offset=".5" stop-color="#e0e0e0"/><stop offset="1" stop-color="#b8b8b8"/></linearGradient></defs><rect x="1.5" y="1.5" width="14" height="14" rx="3" fill="url(#bg14)" stroke="#555" stroke-width="1"/><path d="M2 4.5c3 1.5 10 1.5 13 0" fill="none" stroke="#888" stroke-width=".6"/></svg>
<div class="a" style="left:76px;top:562px;width:110px;height:20px;background:rgba(240,240,240,.88)"></div>
<svg class="a" style="left:79px;top:567px" width="17" height="11" viewBox="0 0 17 11"><path d="M.5 5.5C3 1.5 6 .5 8.5.5s5.5 1 8 5c-2.5 4-5.5 5-8 5s-5.5-1-8-5z" fill="#9a9a9a"/><circle cx="8.5" cy="5.5" r="2.8" fill="#f0f0f0"/><circle cx="8.5" cy="5.5" r="1.6" fill="#9a9a9a"/></svg>
<svg class="a" style="left:104px;top:564px" width="17" height="17" viewBox="0 0 17 17"><defs><linearGradient id="bg15" x1="0" x2="1"><stop offset="0" stop-color="#f4f4f4"/><stop offset=".5" stop-color="#e0e0e0"/><stop offset="1" stop-color="#b8b8b8"/></linearGradient></defs><rect x="1.5" y="1.5" width="14" height="14" rx="3" fill="url(#bg15)" stroke="#555" stroke-width="1"/><path d="M2 4.5c3 1.5 10 1.5 13 0" fill="none" stroke="#888" stroke-width=".6"/></svg>
<div class="a" style="left:76px;top:586px;width:110px;height:20px;background:rgba(240,240,240,.88)"></div>
<svg class="a" style="left:79px;top:591px" width="17" height="11" viewBox="0 0 17 11"><path d="M.5 5.5C3 1.5 6 .5 8.5.5s5.5 1 8 5c-2.5 4-5.5 5-8 5s-5.5-1-8-5z" fill="#9a9a9a"/><circle cx="8.5" cy="5.5" r="2.8" fill="#f0f0f0"/><circle cx="8.5" cy="5.5" r="1.6" fill="#9a9a9a"/></svg>
<svg class="a" style="left:104px;top:588px" width="17" height="17" viewBox="0 0 17 17"><defs><linearGradient id="bg16" x1="0" x2="1"><stop offset="0" stop-color="#f4f4f4"/><stop offset=".5" stop-color="#e0e0e0"/><stop offset="1" stop-color="#b8b8b8"/></linearGradient></defs><rect x="1.5" y="1.5" width="14" height="14" rx="3" fill="url(#bg16)" stroke="#555" stroke-width="1"/><path d="M2 4.5c3 1.5 10 1.5 13 0" fill="none" stroke="#888" stroke-width=".6"/></svg>
<div class="a" style="left:76px;top:610px;width:110px;height:20px;background:rgba(240,240,240,.88)"></div>
<svg class="a" style="left:79px;top:615px" width="17" height="11" viewBox="0 0 17 11"><path d="M.5 5.5C3 1.5 6 .5 8.5.5s5.5 1 8 5c-2.5 4-5.5 5-8 5s-5.5-1-8-5z" fill="#9a9a9a"/><circle cx="8.5" cy="5.5" r="2.8" fill="#f0f0f0"/><circle cx="8.5" cy="5.5" r="1.6" fill="#9a9a9a"/></svg>
<svg class="a" style="left:104px;top:612px" width="17" height="17" viewBox="0 0 17 17"><defs><linearGradient id="bg17" x1="0" x2="1"><stop offset="0" stop-color="#f4f4f4"/><stop offset=".5" stop-color="#e0e0e0"/><stop offset="1" stop-color="#b8b8b8"/></linearGradient></defs><rect x="1.5" y="1.5" width="14" height="14" rx="3" fill="url(#bg17)" stroke="#555" stroke-width="1"/><path d="M2 4.5c3 1.5 10 1.5 13 0" fill="none" stroke="#888" stroke-width=".6"/></svg>
<div class="a" style="left:76px;top:634px;width:110px;height:20px;background:rgba(240,240,240,.88)"></div>
<svg class="a" style="left:79px;top:639px" width="17" height="11" viewBox="0 0 17 11"><path d="M.5 5.5C3 1.5 6 .5 8.5.5s5.5 1 8 5c-2.5 4-5.5 5-8 5s-5.5-1-8-5z" fill="#9a9a9a"/><circle cx="8.5" cy="5.5" r="2.8" fill="#f0f0f0"/><circle cx="8.5" cy="5.5" r="1.6" fill="#9a9a9a"/></svg>
<svg class="a" style="left:104px;top:636px" width="17" height="17" viewBox="0 0 17 17"><defs><linearGradient id="bg18" x1="0" x2="1"><stop offset="0" stop-color="#f4f4f4"/><stop offset=".5" stop-color="#e0e0e0"/><stop offset="1" stop-color="#b8b8b8"/></linearGradient></defs><rect x="1.5" y="1.5" width="14" height="14" rx="3" fill="url(#bg18)" stroke="#555" stroke-width="1"/><path d="M2 4.5c3 1.5 10 1.5 13 0" fill="none" stroke="#888" stroke-width=".6"/></svg>
<div class="a" style="left:76px;top:658px;width:110px;height:20px;background:rgba(240,240,240,.88)"></div>
<svg class="a" style="left:79px;top:663px" width="17" height="11" viewBox="0 0 17 11"><path d="M.5 5.5C3 1.5 6 .5 8.5.5s5.5 1 8 5c-2.5 4-5.5 5-8 5s-5.5-1-8-5z" fill="#9a9a9a"/><circle cx="8.5" cy="5.5" r="2.8" fill="#f0f0f0"/><circle cx="8.5" cy="5.5" r="1.6" fill="#9a9a9a"/></svg>
<svg class="a" style="left:104px;top:660px" width="17" height="17" viewBox="0 0 17 17"><defs><linearGradient id="bg19" x1="0" x2="1"><stop offset="0" stop-color="#f4f4f4"/><stop offset=".5" stop-color="#e0e0e0"/><stop offset="1" stop-color="#b8b8b8"/></linearGradient></defs><rect x="1.5" y="1.5" width="14" height="14" rx="3" fill="url(#bg19)" stroke="#555" stroke-width="1"/><path d="M2 4.5c3 1.5 10 1.5 13 0" fill="none" stroke="#888" stroke-width=".6"/></svg>
<div class="a" style="left:76px;top:682px;width:110px;height:20px;background:rgba(240,240,240,.88)"></div>
<svg class="a" style="left:79px;top:687px" width="17" height="11" viewBox="0 0 17 11"><path d="M.5 5.5C3 1.5 6 .5 8.5.5s5.5 1 8 5c-2.5 4-5.5 5-8 5s-5.5-1-8-5z" fill="#9a9a9a"/><circle cx="8.5" cy="5.5" r="2.8" fill="#f0f0f0"/><circle cx="8.5" cy="5.5" r="1.6" fill="#9a9a9a"/></svg>
<svg class="a" style="left:104px;top:684px" width="17" height="17" viewBox="0 0 17 17"><defs><linearGradient id="bg20" x1="0" x2="1"><stop offset="0" stop-color="#f4f4f4"/><stop offset=".5" stop-color="#e0e0e0"/><stop offset="1" stop-color="#b8b8b8"/></linearGradient></defs><rect x="1.5" y="1.5" width="14" height="14" rx="3" fill="url(#bg20)" stroke="#555" stroke-width="1"/><path d="M2 4.5c3 1.5 10 1.5 13 0" fill="none" stroke="#888" stroke-width=".6"/></svg>
<div class="a" style="left:58px;top:706px;width:138px;height:20px;background:rgba(240,240,240,.88)"></div>
<svg class="a" style="left:38px;top:709px" width="12" height="16" viewBox="0 0 12 16"><path d="M1.5 1.5L10 8l-8.5 6.5z" fill="#fff" stroke="#333" stroke-width="1.2"/></svg>
<svg class="a" style="left:61px;top:711px" width="17" height="11" viewBox="0 0 17 11"><path d="M.5 5.5C3 1.5 6 .5 8.5.5s5.5 1 8 5c-2.5 4-5.5 5-8 5s-5.5-1-8-5z" fill="#9a9a9a"/><circle cx="8.5" cy="5.5" r="2.8" fill="#f0f0f0"/><circle cx="8.5" cy="5.5" r="1.6" fill="#9a9a9a"/></svg>
<svg class="a" style="left:86px;top:709px" width="17" height="14" viewBox="0 0 17 14"><path d="M0 1h6l1 1.5h10V14H0z" fill="#8e8e8e"/><path d="M0 3.5h17" stroke="#a8a8a8" stroke-width=".8"/></svg>
<div class="a" style="left:58px;top:730px;width:98px;height:20px;background:rgba(240,240,240,.88)"></div>
<svg class="a" style="left:60px;top:732px" width="18" height="17" viewBox="0 0 18 17"><path d="M1 14V4l3-3h8v10l-3 3z" fill="#5ea7e3"/><path d="M9 4l3-3v10l-3 3z" fill="#3a86c8"/><path d="M1 4l3-3h8L9 4z" fill="#93c9f2"/><path d="M1 14h8l3-3v2l-3 3H1z" fill="#c0c0c0"/><path d="M16 16V1M14.5 3.5L16 .8l1.5 2.7" fill="none" stroke="#222" stroke-width="1"/></svg>
<div class="a" style="left:58px;top:754px;width:98px;height:20px;background:rgba(240,240,240,.88)"></div>
<svg class="a" style="left:60px;top:756px" width="18" height="17" viewBox="0 0 18 17"><path d="M1 14V4l3-3h8v10l-3 3z" fill="#5ea7e3"/><path d="M9 4l3-3v10l-3 3z" fill="#3a86c8"/><path d="M1 4l3-3h8L9 4z" fill="#93c9f2"/><path d="M1 14h8l3-3v2l-3 3H1z" fill="#c0c0c0"/><path d="M16 16V1M14.5 3.5L16 .8l1.5 2.7" fill="none" stroke="#222" stroke-width="1"/></svg>
<div class="a" style="left:58px;top:778px;width:98px;height:20px;background:rgba(240,240,240,.88)"></div>
<svg class="a" style="left:60px;top:780px" width="18" height="17" viewBox="0 0 18 17"><path d="M1 14V4l3-3h8v10l-3 3z" fill="#5ea7e3"/><path d="M9 4l3-3v10l-3 3z" fill="#3a86c8"/><path d="M1 4l3-3h8L9 4z" fill="#93c9f2"/><path d="M1 14h8l3-3v2l-3 3H1z" fill="#c0c0c0"/><path d="M16 16V1M14.5 3.5L16 .8l1.5 2.7" fill="none" stroke="#222" stroke-width="1"/></svg>
<div class="a" style="left:58px;top:802px;width:98px;height:20px;background:rgba(240,240,240,.88)"></div>
<svg class="a" style="left:60px;top:804px" width="18" height="17" viewBox="0 0 18 17"><path d="M1 14V4l3-3h8v10l-3 3z" fill="#5ea7e3"/><path d="M9 4l3-3v10l-3 3z" fill="#3a86c8"/><path d="M1 4l3-3h8L9 4z" fill="#93c9f2"/><path d="M1 14h8l3-3v2l-3 3H1z" fill="#c0c0c0"/><path d="M16 16V1M14.5 3.5L16 .8l1.5 2.7" fill="none" stroke="#222" stroke-width="1"/></svg>
<div class="a" style="left:58px;top:826px;width:98px;height:20px;background:rgba(240,240,240,.88)"></div>
<svg class="a" style="left:60px;top:828px" width="18" height="17" viewBox="0 0 18 17"><path d="M1 14V4l3-3h8v10l-3 3z" fill="#5ea7e3"/><path d="M9 4l3-3v10l-3 3z" fill="#3a86c8"/><path d="M1 4l3-3h8L9 4z" fill="#93c9f2"/><path d="M1 14h8l3-3v2l-3 3H1z" fill="#c0c0c0"/><path d="M16 16V1M14.5 3.5L16 .8l1.5 2.7" fill="none" stroke="#222" stroke-width="1"/></svg>
<div class="a" style="left:58px;top:850px;width:98px;height:20px;background:rgba(240,240,240,.88)"></div>
<svg class="a" style="left:60px;top:852px" width="18" height="17" viewBox="0 0 18 17"><path d="M1 14V4l3-3h8v10l-3 3z" fill="#5ea7e3"/><path d="M9 4l3-3v10l-3 3z" fill="#3a86c8"/><path d="M1 4l3-3h8L9 4z" fill="#93c9f2"/><path d="M1 14h8l3-3v2l-3 3H1z" fill="#c0c0c0"/><path d="M16 16V1M14.5 3.5L16 .8l1.5 2.7" fill="none" stroke="#222" stroke-width="1"/></svg>
<div class="a" style="left:58px;top:874px;width:98px;height:20px;background:rgba(240,240,240,.88)"></div>
<svg class="a" style="left:60px;top:876px" width="18" height="17" viewBox="0 0 18 17"><path d="M1 14V4l3-3h8v10l-3 3z" fill="#5ea7e3"/><path d="M9 4l3-3v10l-3 3z" fill="#3a86c8"/><path d="M1 4l3-3h8L9 4z" fill="#93c9f2"/><path d="M1 14h8l3-3v2l-3 3H1z" fill="#c0c0c0"/><path d="M16 16V1M14.5 3.5L16 .8l1.5 2.7" fill="none" stroke="#222" stroke-width="1"/></svg>
<div class="a" style="left:58px;top:898px;width:98px;height:20px;background:rgba(240,240,240,.88)"></div>
<svg class="a" style="left:60px;top:900px" width="18" height="17" viewBox="0 0 18 17"><path d="M1 14V4l3-3h8v10l-3 3z" fill="#5ea7e3"/><path d="M9 4l3-3v10l-3 3z" fill="#3a86c8"/><path d="M1 4l3-3h8L9 4z" fill="#93c9f2"/><path d="M1 14h8l3-3v2l-3 3H1z" fill="#c0c0c0"/><path d="M16 16V1M14.5 3.5L16 .8l1.5 2.7" fill="none" stroke="#222" stroke-width="1"/></svg>
<div class="a" style="left:58px;top:922px;width:98px;height:20px;background:rgba(240,240,240,.88)"></div>
<svg class="a" style="left:60px;top:924px" width="18" height="17" viewBox="0 0 18 17"><path d="M1 14V4l3-3h8v10l-3 3z" fill="#5ea7e3"/><path d="M9 4l3-3v10l-3 3z" fill="#3a86c8"/><path d="M1 4l3-3h8L9 4z" fill="#93c9f2"/><path d="M1 14h8l3-3v2l-3 3H1z" fill="#c0c0c0"/><path d="M16 16V1M14.5 3.5L16 .8l1.5 2.7" fill="none" stroke="#222" stroke-width="1"/></svg>
<div class="a" style="left:58px;top:946px;width:98px;height:20px;background:rgba(240,240,240,.88)"></div>
<svg class="a" style="left:60px;top:948px" width="18" height="17" viewBox="0 0 18 17"><path d="M1 14V4l3-3h8v10l-3 3z" fill="#5ea7e3"/><path d="M9 4l3-3v10l-3 3z" fill="#3a86c8"/><path d="M1 4l3-3h8L9 4z" fill="#93c9f2"/><path d="M1 14h8l3-3v2l-3 3H1z" fill="#c0c0c0"/><path d="M16 16V1M14.5 3.5L16 .8l1.5 2.7" fill="none" stroke="#222" stroke-width="1"/></svg>
<div class="a" style="left:58px;top:970px;width:94px;height:20px;background:rgba(240,240,240,.88)"></div>
<svg class="a" style="left:61px;top:972px" width="17" height="17" viewBox="0 0 17 17"><path d="M1 16V5l4-4h5c4 0 6 3 6 7v5l-3 3z" fill="#e3e3e3" stroke="#666" stroke-width=".9"/><path d="M10 1c4 .5 6 3 6 7l-3 2c0-4-1.5-6-4-7z" fill="#4b9ad8"/></svg>
<div class="a" style="left:4px;top:1019px;width:300px;height:25px;background:#f0f0f0;border:1px solid #d4d4d4"></div>
<svg class="a" style="left:281px;top:1025px" width="24" height="12" viewBox="0 0 24 12"><circle cx="6" cy="6" r="5.2" fill="#222"/><path d="M3 6h6M6 3v6" stroke="#fff" stroke-width="1.6"/><path d="M18.5 1v10M20.5 2v8" stroke="#888" stroke-width=".8"/></svg>
<div class="a" style="left:841px;top:1020px;width:237px;height:24px;background:rgba(240,240,240,.92)"></div>
<svg class="a" style="left:841px;top:1020px" width="237" height="24" viewBox="841 1020 237 24">
<!-- orbit -->
<path d="M852.5 1026v14" stroke="#333" stroke-width="2.6"/><path d="M852.5 1026v14" stroke="#fff" stroke-width="1"/><path d="M849.5 1028.5l3-3.5 3 3.5z" fill="#fff" stroke="#333" stroke-width=".8"/>
<path d="M847 1034c-3 1-3 3 1 4s9 1 12-1" fill="none" stroke="#333" stroke-width="1.3"/><path d="M845 1036l3 3v-5z" fill="#333"/>
<path d="M865 1030h6l-3 3.5z" fill="#333"/>
<!-- look at -->
<rect x="877.5" y="1027.5" width="15" height="11" fill="#f4f4f4" stroke="#444" stroke-width="1"/><rect x="880.5" y="1031.5" width="9" height="4" fill="#9aa" stroke="#444" stroke-width=".6"/><path d="M878 1027l3-3 3 2 3-2 3 2 2-2v3" fill="#aaa" stroke="#444" stroke-width=".6"/>
<!-- pan -->
<path d="M906 1040c-2-2-4-6-3-8s2 0 3 1v-7c0-1 2-1 2 0v5-7c0-1 2-1 2 0v7-6c0-1 2-1 2 0v6-4c0-1 2-1 2 0v7c0 3-1 5-3 6z" fill="#eee" stroke="#333" stroke-width=".9"/>
<!-- zoom -->
<circle cx="935" cy="1032" r="4.5" fill="#dfeeee" stroke="#333" stroke-width="1.2"/><path d="M938 1035l3.5 3.5" stroke="#333" stroke-width="2.2"/><path d="M942 1025h4M944 1023v4M942 1029h4" stroke="#333" stroke-width=".9"/>
<!-- fit -->
<rect x="955.5" y="1024.5" width="16" height="15" fill="none" stroke="#444" stroke-width=".8" stroke-dasharray="1.5 1.5"/><circle cx="962" cy="1031" r="5" fill="#dfeeee" stroke="#333" stroke-width="1.2"/><path d="M965.5 1034.5l4 4" stroke="#333" stroke-width="2.2"/>
<path d="M977 1030h6l-3 3.5z" fill="#333"/>
<!-- display -->
<rect x="988.5" y="1024.5" width="15" height="12" rx="1" fill="#eee" stroke="#444" stroke-width="1"/><rect x="990.5" y="1026.5" width="11" height="8" fill="#86a6d6" stroke="#555" stroke-width=".5"/><path d="M993 1039h6" stroke="#666" stroke-width="1.4"/>
<path d="M1007 1030h6l-3 3.5z" fill="#333"/>
<!-- grid -->
<rect x="1019.5" y="1024.5" width="15" height="15" fill="#777" stroke="#444" stroke-width="1"/><path d="M1023.5 1025v14M1027.5 1025v14M1031.5 1025v14M1020 1028.5h14M1020 1032.5h14M1020 1036.5h14" stroke="#eee" stroke-width="1"/>
<path d="M1038 1030h6l-3 3.5z" fill="#333"/>
<!-- viewports -->
<rect x="1050.5" y="1025.5" width="15" height="13" fill="#3a5ca8"/><rect x="1052" y="1027" width="5.5" height="4.5" fill="#9bb4e0"/><rect x="1059" y="1027" width="5.5" height="4.5" fill="#9bb4e0"/><rect x="1052" y="1033" width="5.5" height="4.5" fill="#9bb4e0"/><rect x="1059" y="1033" width="5.5" height="4.5" fill="#9bb4e0"/>
<path d="M1068 1030h6l-3 3.5z" fill="#333"/>
</svg>
<svg class="a" style="left:1805px;top:160px" width="100" height="110" viewBox="1805 160 100 110">
<defs><linearGradient id="vcg" x1="0" y1="0" x2="0" y2="1"><stop offset="0" stop-color="#f2f2f2" stop-opacity=".9"/><stop offset="1" stop-color="#e2e2e2" stop-opacity=".9"/></linearGradient></defs>
<polygon points="1823.2,185.7 1860.2,172.2 1891.5,191.8 1850.9,209.1" fill="url(#vcg)" stroke="#777" stroke-width=".8" stroke-dasharray="3 2"/>
<polygon points="1823.2,185.7 1850.9,209.1 1850.9,248.5 1825.7,223.8" fill="#e6e6e6" fill-opacity=".9" stroke="#777" stroke-width=".8" stroke-dasharray="3 2"/>
<polygon points="1850.9,209.1 1891.5,191.8 1888.5,228.8 1850.9,248.5" fill="#dedede" fill-opacity=".9" stroke="#777" stroke-width=".8" stroke-dasharray="3 2"/>
<path d="M1825.7 223.8L1820.8 180" stroke="#5a6ef0" stroke-width="1.6"/>
<path d="M1825.7 223.8L1855 255" stroke="#e88080" stroke-width="1.4"/>
<text x="1816" y="177" font-family="Liberation Sans" font-size="10" fill="#5a6ef0">Z</text>
<text x="1856" y="264" font-family="Liberation Sans" font-size="10" fill="#e88080">X</text>
<text x="1845" y="198" font-family="Liberation Sans" font-size="15" fill="#666" transform="rotate(-20 1857 192)">上</text>
<text x="1829" y="226" font-family="Liberation Sans" font-size="14" fill="#666" transform="skewY(35) translate(0 -1290)">前</text>
<text x="1858" y="231" font-family="Liberation Sans" font-size="17" fill="#666" transform="skewY(-22) translate(0 750)">右</text>
</svg>

<div class="a" style="left:23.0px;top:11.0px;font-size:12.5px;line-height:16px;color:#000;font-weight:normal;white-space:nowrap;transform:scaleX(0.921);transform-origin:0 50%">Autodesk Fusion 360 (個人用 - 商用利用不可)</div>
<div class="a" style="left:899.6px;top:41.0px;font-size:12.5px;line-height:16px;color:#333;font-weight:normal;white-space:nowrap;transform:scaleX(0.961);transform-origin:0 50%">PC-6082 v24</div>
<div class="a" style="left:1734.0px;top:40.5px;font-size:11.5px;line-height:16px;color:#333;font-weight:normal;white-space:nowrap;transform:scaleX(0.924);transform-origin:0 50%">4/10</div>
<div class="a" style="left:1883.5px;top:39.5px;font-size:12px;line-height:16px;color:#333;font-weight:normal;white-space:nowrap;transform:scaleX(1.194);transform-origin:0 50%">GC</div>
<div class="a" style="left:41.7px;top:95.0px;font-size:11.5px;line-height:16px;color:#222;font-weight:bold;white-space:nowrap;-webkit-text-stroke:0.35px #222;transform:scaleX(0.779);transform-origin:0 50%">デザイン</div>
<div class="a" style="left:149.5px;top:65.0px;font-size:11px;line-height:16px;color:#0696d7;font-weight:bold;white-space:nowrap;-webkit-text-stroke:0.35px #0696d7;transform:scaleX(0.734);transform-origin:0 50%">ソリッド</div>
<div class="a" style="left:227.0px;top:65.0px;font-size:11px;line-height:16px;color:#333;font-weight:normal;white-space:nowrap;transform:scaleX(0.718);transform-origin:0 50%">サーフェス</div>
<div class="a" style="left:315.4px;top:65.0px;font-size:11px;line-height:16px;color:#333;font-weight:normal;white-space:nowrap;transform:scaleX(0.705);transform-origin:0 50%">フォーム</div>
<div class="a" style="left:393.0px;top:65.0px;font-size:11px;line-height:16px;color:#333;font-weight:normal;white-space:nowrap;transform:scaleX(0.677);transform-origin:0 50%">メッシュ</div>
<div class="a" style="left:465.7px;top:65.0px;font-size:11px;line-height:16px;color:#333;font-weight:normal;white-space:nowrap;transform:scaleX(0.776);transform-origin:0 50%">シート メタル</div>
<div class="a" style="left:563.5px;top:65.0px;font-size:11px;line-height:16px;color:#333;font-weight:normal;white-space:nowrap;transform:scaleX(0.761);transform-origin:0 50%">ツール</div>
<div class="a" style="left:219.7px;top:125.7px;font-size:11px;line-height:16px;color:#333;font-weight:normal;white-space:nowrap;transform:scaleX(1.036);transform-origin:0 50%">作成</div>
<div class="a" style="left:468.0px;top:125.7px;font-size:11px;line-height:16px;color:#333;font-weight:normal;white-space:nowrap;transform:scaleX(1.045);transform-origin:0 50%">修正</div>
<div class="a" style="left:641.5px;top:125.7px;font-size:11px;line-height:16px;color:#333;font-weight:normal;white-space:nowrap;transform:scaleX(0.764);transform-origin:0 50%">アセンブリ</div>
<div class="a" style="left:730.0px;top:125.7px;font-size:11px;line-height:16px;color:#333;font-weight:normal;white-space:nowrap;transform:scaleX(1.091);transform-origin:0 50%">構築</div>
<div class="a" style="left:789.0px;top:125.7px;font-size:11px;line-height:16px;color:#333;font-weight:normal;white-space:nowrap;transform:scaleX(1.068);transform-origin:0 50%">検査</div>
<div class="a" style="left:848.4px;top:125.7px;font-size:11px;line-height:16px;color:#333;font-weight:normal;white-space:nowrap;transform:scaleX(1.050);transform-origin:0 50%">挿入</div>
<div class="a" style="left:907.5px;top:125.7px;font-size:11px;line-height:16px;color:#333;font-weight:normal;white-space:nowrap;transform:scaleX(1.068);transform-origin:0 50%">選択</div>
<div class="a" style="left:29.0px;top:152.4px;font-size:11px;line-height:16px;color:#333;font-weight:normal;white-space:nowrap;transform:scaleX(0.709);transform-origin:0 50%">ブラウザ</div>
<div class="a" style="left:28.0px;top:1023.0px;font-size:11px;line-height:16px;color:#333;font-weight:normal;white-space:nowrap;transform:scaleX(0.705);transform-origin:0 50%">コメント</div>
<div class="a" style="left:115.6px;top:180.8px;font-size:11px;line-height:16px;color:#222;font-weight:normal;white-space:nowrap;transform:scaleX(0.718);transform-origin:0 50%">ボディ</div>
<div class="a" style="left:115.6px;top:709.0px;font-size:11px;line-height:16px;color:#222;font-weight:normal;white-space:nowrap;transform:scaleX(0.713);transform-origin:0 50%">コンストラクション</div>
<div class="a" style="left:133.6px;top:205.0px;font-size:11px;line-height:16px;color:#222;font-weight:normal;white-space:nowrap;transform:scaleX(0.822);transform-origin:0 50%">ボディ128</div>
<div class="a" style="left:133.6px;top:229.0px;font-size:11px;line-height:16px;color:#222;font-weight:normal;white-space:nowrap;transform:scaleX(0.822);transform-origin:0 50%">ボディ129</div>
<div class="a" style="left:133.6px;top:253.0px;font-size:11px;line-height:16px;color:#222;font-weight:normal;white-space:nowrap;transform:scaleX(0.822);transform-origin:0 50%">ボディ147</div>
<div class="a" style="left:133.6px;top:277.0px;font-size:11px;line-height:16px;color:#222;font-weight:normal;white-space:nowrap;transform:scaleX(0.822);transform-origin:0 50%">ボディ148</div>
<div class="a" style="left:133.6px;top:301.0px;font-size:11px;line-height:16px;color:#222;font-weight:normal;white-space:nowrap;transform:scaleX(0.822);transform-origin:0 50%">ボディ149</div>
<div class="a" style="left:133.6px;top:325.0px;font-size:11px;line-height:16px;color:#222;font-weight:normal;white-space:nowrap;transform:scaleX(0.822);transform-origin:0 50%">ボディ150</div>
<div class="a" style="left:133.6px;top:349.0px;font-size:11px;line-height:16px;color:#222;font-weight:normal;white-space:nowrap;transform:scaleX(0.822);transform-origin:0 50%">ボディ151</div>
<div class="a" style="left:133.6px;top:373.0px;font-size:11px;line-height:16px;color:#222;font-weight:normal;white-space:nowrap;transform:scaleX(0.822);transform-origin:0 50%">ボディ158</div>
<div class="a" style="left:133.6px;top:397.0px;font-size:11px;line-height:16px;color:#222;font-weight:normal;white-space:nowrap;transform:scaleX(0.822);transform-origin:0 50%">ボディ159</div>
<div class="a" style="left:133.6px;top:421.0px;font-size:11px;line-height:16px;color:#222;font-weight:normal;white-space:nowrap;transform:scaleX(0.822);transform-origin:0 50%">ボディ163</div>
<div class="a" style="left:133.6px;top:445.0px;font-size:11px;line-height:16px;color:#222;font-weight:normal;white-space:nowrap;transform:scaleX(0.822);transform-origin:0 50%">ボディ195</div>
<div class="a" style="left:133.6px;top:469.0px;font-size:11px;line-height:16px;color:#222;font-weight:normal;white-space:nowrap;transform:scaleX(0.822);transform-origin:0 50%">ボディ204</div>
<div class="a" style="left:133.6px;top:493.0px;font-size:11px;line-height:16px;color:#222;font-weight:normal;white-space:nowrap;transform:scaleX(0.822);transform-origin:0 50%">ボディ213</div>
<div class="a" style="left:133.6px;top:517.0px;font-size:11px;line-height:16px;color:#222;font-weight:normal;white-space:nowrap;transform:scaleX(0.822);transform-origin:0 50%">ボディ217</div>
<div class="a" style="left:133.6px;top:541.0px;font-size:11px;line-height:16px;color:#222;font-weight:normal;white-space:nowrap;transform:scaleX(0.822);transform-origin:0 50%">ボディ233</div>
<div class="a" style="left:133.6px;top:565.0px;font-size:11px;line-height:16px;color:#222;font-weight:normal;white-space:nowrap;transform:scaleX(0.822);transform-origin:0 50%">ボディ240</div>
<div class="a" style="left:133.6px;top:589.0px;font-size:11px;line-height:16px;color:#222;font-weight:normal;white-space:nowrap;transform:scaleX(0.822);transform-origin:0 50%">ボディ264</div>
<div class="a" style="left:133.6px;top:613.0px;font-size:11px;line-height:16px;color:#222;font-weight:normal;white-space:nowrap;transform:scaleX(0.822);transform-origin:0 50%">ボディ289</div>
<div class="a" style="left:133.6px;top:637.0px;font-size:11px;line-height:16px;color:#222;font-weight:normal;white-space:nowrap;transform:scaleX(0.822);transform-origin:0 50%">ボディ302</div>
<div class="a" style="left:133.6px;top:661.0px;font-size:11px;line-height:16px;color:#222;font-weight:normal;white-space:nowrap;transform:scaleX(0.822);transform-origin:0 50%">ボディ306</div>
<div class="a" style="left:133.6px;top:685.0px;font-size:11px;line-height:16px;color:#222;font-weight:normal;white-space:nowrap;transform:scaleX(0.822);transform-origin:0 50%">ボディ315</div>
<div class="a" style="left:90.5px;top:732.7px;font-size:11px;line-height:16px;color:#222;font-weight:normal;white-space:nowrap;transform:scaleX(0.904);transform-origin:0 50%">押し出し210</div>
<div class="a" style="left:90.5px;top:756.7px;font-size:11px;line-height:16px;color:#222;font-weight:normal;white-space:nowrap;transform:scaleX(0.886);transform-origin:0 50%">押し出し211</div>
<div class="a" style="left:90.5px;top:780.7px;font-size:11px;line-height:16px;color:#222;font-weight:normal;white-space:nowrap;transform:scaleX(0.904);transform-origin:0 50%">押し出し231</div>
<div class="a" style="left:90.5px;top:804.7px;font-size:11px;line-height:16px;color:#222;font-weight:normal;white-space:nowrap;transform:scaleX(0.904);transform-origin:0 50%">押し出し232</div>
<div class="a" style="left:90.5px;top:828.7px;font-size:11px;line-height:16px;color:#222;font-weight:normal;white-space:nowrap;transform:scaleX(0.904);transform-origin:0 50%">押し出し233</div>
<div class="a" style="left:90.5px;top:852.7px;font-size:11px;line-height:16px;color:#222;font-weight:normal;white-space:nowrap;transform:scaleX(0.904);transform-origin:0 50%">押し出し234</div>
<div class="a" style="left:90.5px;top:876.7px;font-size:11px;line-height:16px;color:#222;font-weight:normal;white-space:nowrap;transform:scaleX(0.904);transform-origin:0 50%">押し出し235</div>
<div class="a" style="left:90.5px;top:900.7px;font-size:11px;line-height:16px;color:#222;font-weight:normal;white-space:nowrap;transform:scaleX(0.904);transform-origin:0 50%">押し出し242</div>
<div class="a" style="left:90.5px;top:924.7px;font-size:11px;line-height:16px;color:#222;font-weight:normal;white-space:nowrap;transform:scaleX(0.904);transform-origin:0 50%">押し出し243</div>
<div class="a" style="left:90.5px;top:948.7px;font-size:11px;line-height:16px;color:#222;font-weight:normal;white-space:nowrap;transform:scaleX(0.904);transform-origin:0 50%">押し出し247</div>
<div class="a" style="left:90.5px;top:972.7px;font-size:11px;line-height:16px;color:#222;font-weight:normal;white-space:nowrap;transform:scaleX(0.716);transform-origin:0 50%">フィレット251</div>
</body></html>
